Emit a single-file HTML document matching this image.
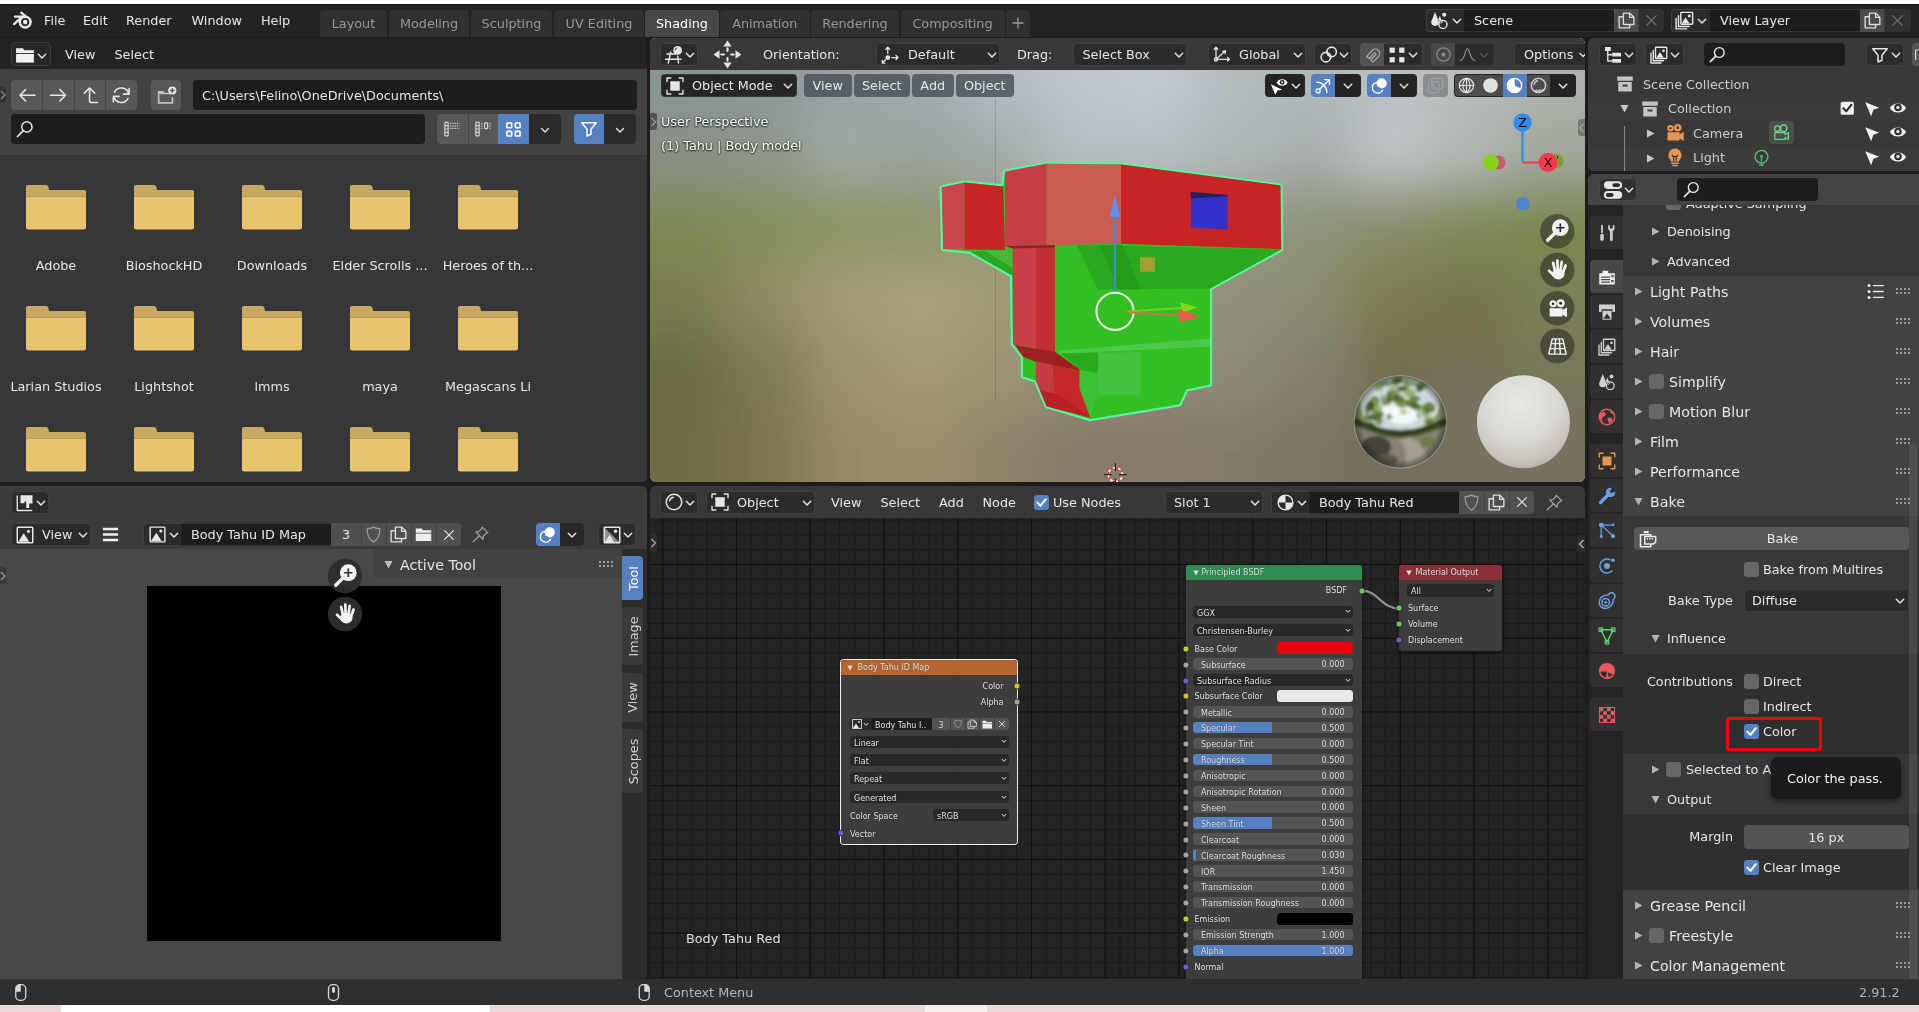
<!DOCTYPE html>
<html><head><meta charset="utf-8"><title>Blender</title>
<style>
html,body{margin:0;padding:0;background:#1d1d1d;}
body{width:1919px;height:1012px;overflow:hidden;}
#root{position:relative;width:1919px;height:1012px;overflow:hidden;background:#1d1d1d;font-family:"DejaVu Sans","Liberation Sans",sans-serif;font-size:13px;color:#e6e6e6;}
#root div,#root svg{position:absolute;box-sizing:border-box;}
#layer{left:0;top:0;width:1919px;height:1012px;will-change:transform;}
#root svg{overflow:visible;}
.t{white-space:nowrap;font-size:12.8px;color:#e6e6e6;}
.tp{white-space:nowrap;font-size:14.2px;color:#e6e6e6;}
.tn{margin-top:1px;white-space:nowrap;font-size:8px;color:#e6e6e6;text-shadow:0 0 1px rgba(0,0,0,.6);}
.ts{white-space:nowrap;font-size:12.8px;color:#fff;text-shadow:0 1px 2px rgba(0,0,0,.9),0 0 2px rgba(0,0,0,.7);}
.clip{overflow:hidden;}

</style></head>
<body>
<div id="root"><div id="layer">
<!-- s_top.py -->
<div style="left:0px;top:0px;width:1919px;height:4px;background:#fff;"></div>
<div style="left:0px;top:4px;width:1919px;height:33px;background:#232323;border-top:1px solid #0e0e0e;"></div>
<svg style="left:10px;top:8px;" width="26" height="24" viewBox="0 0 26 24"><g fill="none" stroke="#ebebeb" stroke-linecap="round"><path d="M4.0 16.1 L11.4 9.6 M4.9 8.7 H12.4 M11.2 4.7 L15.6 8.2" stroke-width="2.3"/><circle cx="15.2" cy="14.1" r="5.35" stroke-width="2.5"/></g><circle cx="15.2" cy="14.1" r="2.3" fill="#ebebeb"/></svg>
<div class="t" style="left:44px;top:8.5px;line-height:24px;">File</div>
<div class="t" style="left:83px;top:8.5px;line-height:24px;">Edit</div>
<div class="t" style="left:126px;top:8.5px;line-height:24px;">Render</div>
<div class="t" style="left:191.5px;top:8.5px;line-height:24px;">Window</div>
<div class="t" style="left:261px;top:8.5px;line-height:24px;">Help</div>
<div style="left:320px;top:10px;width:67px;height:27px;background:#303030;border-radius:4px 4px 0 0;"></div>
<div class="t" style="left:320px;top:10.5px;width:67px;text-align:center;line-height:26px;color:#989898;">Layout</div>
<div style="left:389px;top:10px;width:80px;height:27px;background:#303030;border-radius:4px 4px 0 0;"></div>
<div class="t" style="left:389px;top:10.5px;width:80px;text-align:center;line-height:26px;color:#989898;">Modeling</div>
<div style="left:471px;top:10px;width:81px;height:27px;background:#303030;border-radius:4px 4px 0 0;"></div>
<div class="t" style="left:471px;top:10.5px;width:81px;text-align:center;line-height:26px;color:#989898;">Sculpting</div>
<div style="left:554px;top:10px;width:90px;height:27px;background:#303030;border-radius:4px 4px 0 0;"></div>
<div class="t" style="left:554px;top:10.5px;width:90px;text-align:center;line-height:26px;color:#989898;">UV Editing</div>
<div style="left:645px;top:10px;width:74px;height:27px;background:#484848;border-radius:4px 4px 0 0;"></div>
<div class="t" style="left:645px;top:10.5px;width:74px;text-align:center;line-height:26px;color:#ffffff;">Shading</div>
<div style="left:720px;top:10px;width:89.5px;height:27px;background:#303030;border-radius:4px 4px 0 0;"></div>
<div class="t" style="left:720px;top:10.5px;width:89.5px;text-align:center;line-height:26px;color:#989898;">Animation</div>
<div style="left:811px;top:10px;width:88px;height:27px;background:#303030;border-radius:4px 4px 0 0;"></div>
<div class="t" style="left:811px;top:10.5px;width:88px;text-align:center;line-height:26px;color:#989898;">Rendering</div>
<div style="left:900.5px;top:10px;width:104.0px;height:27px;background:#303030;border-radius:4px 4px 0 0;"></div>
<div class="t" style="left:900.5px;top:10.5px;width:104.0px;text-align:center;line-height:26px;color:#989898;">Compositing</div>
<div style="left:1006px;top:10px;width:23.5px;height:27px;background:#303030;border-radius:4px 4px 0 0;"></div>
<svg style="left:1011.5px;top:17px;" width="12" height="12" viewBox="0 0 12 12"><path d="M6 0.5 V11.5 M0.5 6 H11.5" stroke="#9a9a9a" stroke-width="1.3" fill="none"/></svg>
<div style="left:1426px;top:9px;width:38px;height:23px;background:#2b2b2b;border:1px solid #404040;border-right:none;border-radius:4px 0 0 4px;"></div>
<svg style="left:1429.00px;top:10.00px;" width="21" height="21" viewBox="0 0 16 16"><path d="M4.6 1.6 L7.4 8.6 A2.9 2.9 0 1 1 1.8 8.6Z" fill="#e6e6e6" /><path d="M8.2 4.4 L9.8 8 H6.9Z" fill="#e6e6e6" /><circle cx="11.6" cy="3.6" r="1.6" fill="#e6e6e6"/><circle cx="10.6" cy="11" r="3.1" fill="none" stroke="#e6e6e6" stroke-width="1.1"/><path d="M9 10 A1.8 1.8 0 0 1 10.4 9" fill="none" stroke="#e6e6e6" stroke-width="0.8" stroke-linecap="round" stroke-linejoin="round" /></svg>
<svg style="left:1448.50px;top:13.00px;" width="16" height="16" viewBox="0 0 16 16"><path d="M4.3 6.2 L8 9.9 L11.7 6.2" fill="none" stroke="#e6e6e6" stroke-width="1.45" stroke-linecap="round" stroke-linejoin="round" /></svg>
<div style="left:1464px;top:9px;width:150px;height:23px;background:#1d1d1d;border:1px solid #343434;border-left:none;border-right:none;"></div>
<div class="t" style="left:1474px;top:9px;line-height:23px;">Scene</div>
<div style="left:1614px;top:9px;width:25px;height:23px;background:#4b4b4b;border-right:1px solid #3a3a3a;"></div>
<svg style="left:1617.00px;top:11.00px;" width="19" height="19" viewBox="0 0 16 16"><path d="M5.4 4.6 V1.8 H10.8 L14.2 5.2 V11.4 H5.4 V4.6 M10.6 1.8 V5.4 H14.2 M5.2 4.8 H1.8 V14.2 H10.6 V11.6" fill="none" stroke="#dcdcdc" stroke-width="1.15" stroke-linecap="round" stroke-linejoin="round" /></svg>
<div style="left:1639px;top:9px;width:25px;height:23px;background:#303030;border-radius:0 4px 4px 0;"></div>
<svg style="left:1643.00px;top:12.00px;" width="17" height="17" viewBox="0 0 16 16"><path d="M3.6 3.6 L12.4 12.4 M12.4 3.6 L3.6 12.4" fill="none" stroke="#6a6a6a" stroke-width="1.2" stroke-linecap="round" stroke-linejoin="round" /></svg>
<div style="left:1671px;top:9px;width:39px;height:23px;background:#2b2b2b;border:1px solid #404040;border-right:none;border-radius:4px 0 0 4px;"></div>
<svg style="left:1674.00px;top:10.00px;" width="21" height="21" viewBox="0 0 16 16"><rect x="5.2" y="1.8" width="9" height="9" rx="0.5" fill="none" stroke="#e6e6e6" stroke-width="1.1"/><path d="M5.8 10.2 L8.8 5.6 L11.8 10.2Z" fill="#e6e6e6"/><circle cx="11.6" cy="4.6" r="1.1" fill="#e6e6e6"/><path d="M3.4 4.4 V12.6 H11.6 M1.6 6.4 V14.4 H9.6" fill="none" stroke="#e6e6e6" stroke-width="1.1" stroke-linecap="round" stroke-linejoin="round" /></svg>
<svg style="left:1693.50px;top:13.00px;" width="16" height="16" viewBox="0 0 16 16"><path d="M4.3 6.2 L8 9.9 L11.7 6.2" fill="none" stroke="#e6e6e6" stroke-width="1.45" stroke-linecap="round" stroke-linejoin="round" /></svg>
<div style="left:1710px;top:9px;width:150px;height:23px;background:#1d1d1d;border:1px solid #343434;border-left:none;border-right:none;"></div>
<div class="t" style="left:1720px;top:9px;line-height:23px;">View Layer</div>
<div style="left:1860px;top:9px;width:25px;height:23px;background:#4b4b4b;border-right:1px solid #3a3a3a;"></div>
<svg style="left:1863.00px;top:11.00px;" width="19" height="19" viewBox="0 0 16 16"><path d="M5.4 4.6 V1.8 H10.8 L14.2 5.2 V11.4 H5.4 V4.6 M10.6 1.8 V5.4 H14.2 M5.2 4.8 H1.8 V14.2 H10.6 V11.6" fill="none" stroke="#dcdcdc" stroke-width="1.15" stroke-linecap="round" stroke-linejoin="round" /></svg>
<div style="left:1885px;top:9px;width:26px;height:23px;background:#303030;border-radius:0 4px 4px 0;"></div>
<svg style="left:1889.00px;top:12.00px;" width="17" height="17" viewBox="0 0 16 16"><path d="M3.6 3.6 L12.4 12.4 M12.4 3.6 L3.6 12.4" fill="none" stroke="#6a6a6a" stroke-width="1.2" stroke-linecap="round" stroke-linejoin="round" /></svg>
<!-- s_file.py -->
<div style="left:0px;top:38px;width:647px;height:444px;background:#373737;border-radius:0 5px 5px 0;overflow:hidden;"><div style="left:0;top:0;width:647px;height:31px;background:#232323;"></div><div style="left:0;top:31px;width:647px;height:86px;background:#424242;"></div></div>
<div style="left:10.5px;top:42px;width:40px;height:24px;background:#282828;border:1px solid #3e3e3e;border-radius:5px;"></div>
<svg style="left:14.00px;top:43.50px;" width="22" height="22" viewBox="0 0 16 16"><path d="M1.5 3 h5 l1 1.5 h7 v2 h-13z" fill="#f0f0f0" /><path d="M1.5 7.2 h13 v6.3 h-13z" fill="#f0f0f0" /></svg>
<svg style="left:33.70px;top:47.50px;" width="16" height="16" viewBox="0 0 16 16"><path d="M4.3 6.2 L8 9.9 L11.7 6.2" fill="none" stroke="#e6e6e6" stroke-width="1.45" stroke-linecap="round" stroke-linejoin="round" /></svg>
<div class="t" style="left:65px;top:42.5px;line-height:24px;">View</div>
<div class="t" style="left:114.5px;top:42.5px;line-height:24px;">Select</div>
<div style="left:11px;top:80px;width:126px;height:30px;background:#585858;border-radius:4px;"></div>
<svg style="left:15.50px;top:84.05px;" width="22.5" height="22.5" viewBox="0 0 16 16"><path d="M13.5 8 H2.8 M6.8 4 L2.8 8 L6.8 12" fill="none" stroke="#e6e6e6" stroke-width="1.1" stroke-linecap="round" stroke-linejoin="round" /></svg>
<svg style="left:47.00px;top:84.05px;" width="22.5" height="22.5" viewBox="0 0 16 16"><path d="M2.5 8 H13.2 M9.2 4 L13.2 8 L9.2 12" fill="none" stroke="#e6e6e6" stroke-width="1.1" stroke-linecap="round" stroke-linejoin="round" /></svg>
<div style="left:42.0px;top:80px;width:1px;height:30px;background:#454545;"></div>
<svg style="left:78.50px;top:84.05px;" width="22.5" height="22.5" viewBox="0 0 16 16"><path d="M13 13.2 H9 Q7.5 13.2 7.5 11.7 V3 M3.8 6.5 L7.5 2.8 L11.2 6.5" fill="none" stroke="#e6e6e6" stroke-width="1.1" stroke-linecap="round" stroke-linejoin="round" /></svg>
<div style="left:73.5px;top:80px;width:1px;height:30px;background:#454545;"></div>
<svg style="left:110.00px;top:84.05px;" width="22.5" height="22.5" viewBox="0 0 16 16"><path d="M13.3 7.2 A5.4 5.4 0 0 0 3.2 5.8 M2.7 8.8 A5.4 5.4 0 0 0 12.8 10.2 M13.6 3.2 V7.2 H9.6 M2.4 12.8 V8.8 H6.4" fill="none" stroke="#e6e6e6" stroke-width="1.1" stroke-linecap="round" stroke-linejoin="round" /></svg>
<div style="left:105.0px;top:80px;width:1px;height:30px;background:#454545;"></div>
<div style="left:151px;top:80px;width:30px;height:30px;background:#585858;border-radius:4px;"></div>
<svg style="left:155.25px;top:83.75px;" width="22.5" height="22.5" viewBox="0 0 16 16"><path d="M2 5 h4 l1 1.3 h4.2 v1 h-9.2z" fill="#e6e6e6" opacity=".75"/><path d="M2.6 7.5 V13.4 H12.4 V9.5" fill="none" stroke="#e6e6e6" stroke-width="1.2" opacity=".75"/><circle cx="12.3" cy="4.6" r="2.9" fill="#e6e6e6"/><path d="M12.3 3 v3.2 M10.7 4.6 h3.2" stroke="#545454" stroke-width="1"/></svg>
<div style="left:193px;top:80px;width:444px;height:30px;background:#1d1d1d;border-radius:4px;"></div>
<div class="t" style="left:202px;top:80.5px;line-height:30px;">C:\Users\Felino\OneDrive\Documents\</div>
<div style="left:11px;top:114px;width:414px;height:30px;background:#1d1d1d;border-radius:4px;"></div>
<svg style="left:15.00px;top:118.50px;" width="20" height="20" viewBox="0 0 16 16"><circle cx="9.5" cy="6.3" r="4.1" fill="none" stroke="#e6e6e6" stroke-width="1.2"/><path d="M6.6 9.3 L2 14" fill="none" stroke="#e6e6e6" stroke-width="1.4" stroke-linecap="round" stroke-linejoin="round" /></svg>
<div style="left:437px;top:114px;width:92px;height:30px;background:#585858;border-radius:4px 0 0 4px;"></div>
<div style="left:467.5px;top:114px;width:1px;height:30px;background:#454545;"></div>
<svg style="left:442.00px;top:119.00px;" width="20" height="20" viewBox="0 0 16 16"><rect x="2.3" y="2.5" width="2.6" height="11" rx="0.6" fill="none" stroke="#d0d0d0" stroke-width="1"/><path d="M2.5 5.3 h2.4 M2.5 8 h2.4 M2.5 10.7 h2.4" fill="none" stroke="#d0d0d0" stroke-width="0.9" stroke-linecap="round" stroke-linejoin="round" /><path d="M6.5 3.5 h7.5" stroke="#d0d0d0" stroke-width="1" stroke-dasharray="1 0.8" fill="none"/><path d="M6.5 5.5 h7.5" stroke="#d0d0d0" stroke-width="1" stroke-dasharray="1 0.8" fill="none"/><path d="M6.5 7.5 h7.5" stroke="#d0d0d0" stroke-width="1" stroke-dasharray="1 0.8" fill="none"/></svg>
<svg style="left:472.50px;top:119.00px;" width="20" height="20" viewBox="0 0 16 16"><rect x="2.3" y="2.5" width="2.6" height="11" rx="0.6" fill="none" stroke="#d0d0d0" stroke-width="1"/><path d="M2.5 5.3 h2.4 M2.5 8 h2.4 M2.5 10.7 h2.4" fill="none" stroke="#d0d0d0" stroke-width="0.9" stroke-linecap="round" stroke-linejoin="round" /><rect x="9.3" y="3" width="2.4" height="4.6" rx="0.5" fill="none" stroke="#d0d0d0" stroke-width="1"/><path d="M7 3.2 v4.6" stroke="#d0d0d0" stroke-width="1" stroke-dasharray="1 0.9" fill="none"/><path d="M13.6 3.2 v4.6" stroke="#d0d0d0" stroke-width="1" stroke-dasharray="1 0.9" fill="none"/></svg>
<div style="left:498px;top:114px;width:31px;height:30px;background:#5680c2;"></div>
<svg style="left:503.00px;top:118.50px;" width="21" height="21" viewBox="0 0 16 16"><rect x="3" y="3" width="3.6" height="3.6" rx="0.4" fill="none" stroke="#ffffff" stroke-width="1.2"/><rect x="3" y="9.4" width="3.6" height="3.6" rx="0.4" fill="none" stroke="#ffffff" stroke-width="1.2"/><rect x="9.4" y="3" width="3.6" height="3.6" rx="0.4" fill="none" stroke="#ffffff" stroke-width="1.2"/><rect x="9.4" y="9.4" width="3.6" height="3.6" rx="0.4" fill="none" stroke="#ffffff" stroke-width="1.2"/></svg>
<div style="left:529px;top:114px;width:32px;height:30px;background:#2a2a2a;border-radius:0 4px 4px 0;"></div>
<svg style="left:537.00px;top:121.50px;" width="16" height="16" viewBox="0 0 16 16"><path d="M4.5 6.5 L8 10 L11.5 6.5" fill="none" stroke="#e6e6e6" stroke-width="1.4" stroke-linecap="round" stroke-linejoin="round" /></svg>
<div style="left:574px;top:114px;width:30px;height:30px;background:#5680c2;border-radius:4px 0 0 4px;"></div>
<svg style="left:579.00px;top:119.00px;" width="20" height="20" viewBox="0 0 16 16"><path d="M2.2 3 H13.8 L9.6 8.2 V12.2 L6.4 13.6 V8.2 Z" fill="none" stroke="#ffffff" stroke-width="1.2" stroke-linecap="round" stroke-linejoin="round" /></svg>
<div style="left:604px;top:114px;width:32px;height:30px;background:#2a2a2a;border-radius:0 4px 4px 0;"></div>
<svg style="left:612.00px;top:121.50px;" width="16" height="16" viewBox="0 0 16 16"><path d="M4.5 6.5 L8 10 L11.5 6.5" fill="none" stroke="#e6e6e6" stroke-width="1.4" stroke-linecap="round" stroke-linejoin="round" /></svg>
<div style="left:0px;top:87px;width:6px;height:16px;background:#333;border-radius:0 3px 3px 0;"></div>
<svg style="left:0px;top:90px;" width="6" height="10" viewBox="0 0 6 10"><path d="M1 1 L5 5 L1 9" stroke="#8a8a8a" stroke-width="1.2" fill="none"/></svg>
<svg style="left:26px;top:185px;overflow:hidden" width="60" height="44.5" viewBox="0 0 60 44.5"><path d="M0 2 Q0 0 2 0 H20 Q22 0 22.4 2 L23 5 H58 Q60 5 60 7 V12 H0Z" fill="#c7a962"/><path d="M0 11.3 H60 V11.8 H0Z" fill="#a88f52"/><path d="M0 12 H60 V42.5 Q60 44.5 58 44.5 H2 Q0 44.5 0 42.5Z" fill="#e8c46f"/></svg>
<div class="t" style="left:-4px;top:253.5px;width:120px;text-align:center;line-height:24px;">Adobe</div>
<svg style="left:134px;top:185px;overflow:hidden" width="60" height="44.5" viewBox="0 0 60 44.5"><path d="M0 2 Q0 0 2 0 H20 Q22 0 22.4 2 L23 5 H58 Q60 5 60 7 V12 H0Z" fill="#c7a962"/><path d="M0 11.3 H60 V11.8 H0Z" fill="#a88f52"/><path d="M0 12 H60 V42.5 Q60 44.5 58 44.5 H2 Q0 44.5 0 42.5Z" fill="#e8c46f"/></svg>
<div class="t" style="left:104px;top:253.5px;width:120px;text-align:center;line-height:24px;">BioshockHD</div>
<svg style="left:242px;top:185px;overflow:hidden" width="60" height="44.5" viewBox="0 0 60 44.5"><path d="M0 2 Q0 0 2 0 H20 Q22 0 22.4 2 L23 5 H58 Q60 5 60 7 V12 H0Z" fill="#c7a962"/><path d="M0 11.3 H60 V11.8 H0Z" fill="#a88f52"/><path d="M0 12 H60 V42.5 Q60 44.5 58 44.5 H2 Q0 44.5 0 42.5Z" fill="#e8c46f"/></svg>
<div class="t" style="left:212px;top:253.5px;width:120px;text-align:center;line-height:24px;">Downloads</div>
<svg style="left:350px;top:185px;overflow:hidden" width="60" height="44.5" viewBox="0 0 60 44.5"><path d="M0 2 Q0 0 2 0 H20 Q22 0 22.4 2 L23 5 H58 Q60 5 60 7 V12 H0Z" fill="#c7a962"/><path d="M0 11.3 H60 V11.8 H0Z" fill="#a88f52"/><path d="M0 12 H60 V42.5 Q60 44.5 58 44.5 H2 Q0 44.5 0 42.5Z" fill="#e8c46f"/></svg>
<div class="t" style="left:320px;top:253.5px;width:120px;text-align:center;line-height:24px;">Elder Scrolls ...</div>
<svg style="left:458px;top:185px;overflow:hidden" width="60" height="44.5" viewBox="0 0 60 44.5"><path d="M0 2 Q0 0 2 0 H20 Q22 0 22.4 2 L23 5 H58 Q60 5 60 7 V12 H0Z" fill="#c7a962"/><path d="M0 11.3 H60 V11.8 H0Z" fill="#a88f52"/><path d="M0 12 H60 V42.5 Q60 44.5 58 44.5 H2 Q0 44.5 0 42.5Z" fill="#e8c46f"/></svg>
<div class="t" style="left:428px;top:253.5px;width:120px;text-align:center;line-height:24px;">Heroes of th...</div>
<svg style="left:26px;top:306px;overflow:hidden" width="60" height="44.5" viewBox="0 0 60 44.5"><path d="M0 2 Q0 0 2 0 H20 Q22 0 22.4 2 L23 5 H58 Q60 5 60 7 V12 H0Z" fill="#c7a962"/><path d="M0 11.3 H60 V11.8 H0Z" fill="#a88f52"/><path d="M0 12 H60 V42.5 Q60 44.5 58 44.5 H2 Q0 44.5 0 42.5Z" fill="#e8c46f"/></svg>
<div class="t" style="left:-4px;top:374.5px;width:120px;text-align:center;line-height:24px;">Larian Studios</div>
<svg style="left:134px;top:306px;overflow:hidden" width="60" height="44.5" viewBox="0 0 60 44.5"><path d="M0 2 Q0 0 2 0 H20 Q22 0 22.4 2 L23 5 H58 Q60 5 60 7 V12 H0Z" fill="#c7a962"/><path d="M0 11.3 H60 V11.8 H0Z" fill="#a88f52"/><path d="M0 12 H60 V42.5 Q60 44.5 58 44.5 H2 Q0 44.5 0 42.5Z" fill="#e8c46f"/></svg>
<div class="t" style="left:104px;top:374.5px;width:120px;text-align:center;line-height:24px;">Lightshot</div>
<svg style="left:242px;top:306px;overflow:hidden" width="60" height="44.5" viewBox="0 0 60 44.5"><path d="M0 2 Q0 0 2 0 H20 Q22 0 22.4 2 L23 5 H58 Q60 5 60 7 V12 H0Z" fill="#c7a962"/><path d="M0 11.3 H60 V11.8 H0Z" fill="#a88f52"/><path d="M0 12 H60 V42.5 Q60 44.5 58 44.5 H2 Q0 44.5 0 42.5Z" fill="#e8c46f"/></svg>
<div class="t" style="left:212px;top:374.5px;width:120px;text-align:center;line-height:24px;">lmms</div>
<svg style="left:350px;top:306px;overflow:hidden" width="60" height="44.5" viewBox="0 0 60 44.5"><path d="M0 2 Q0 0 2 0 H20 Q22 0 22.4 2 L23 5 H58 Q60 5 60 7 V12 H0Z" fill="#c7a962"/><path d="M0 11.3 H60 V11.8 H0Z" fill="#a88f52"/><path d="M0 12 H60 V42.5 Q60 44.5 58 44.5 H2 Q0 44.5 0 42.5Z" fill="#e8c46f"/></svg>
<div class="t" style="left:320px;top:374.5px;width:120px;text-align:center;line-height:24px;">maya</div>
<svg style="left:458px;top:306px;overflow:hidden" width="60" height="44.5" viewBox="0 0 60 44.5"><path d="M0 2 Q0 0 2 0 H20 Q22 0 22.4 2 L23 5 H58 Q60 5 60 7 V12 H0Z" fill="#c7a962"/><path d="M0 11.3 H60 V11.8 H0Z" fill="#a88f52"/><path d="M0 12 H60 V42.5 Q60 44.5 58 44.5 H2 Q0 44.5 0 42.5Z" fill="#e8c46f"/></svg>
<div class="t" style="left:428px;top:374.5px;width:120px;text-align:center;line-height:24px;">Megascans Li</div>
<svg style="left:26px;top:427px;overflow:hidden" width="60" height="44.5" viewBox="0 0 60 44.5"><path d="M0 2 Q0 0 2 0 H20 Q22 0 22.4 2 L23 5 H58 Q60 5 60 7 V12 H0Z" fill="#c7a962"/><path d="M0 11.3 H60 V11.8 H0Z" fill="#a88f52"/><path d="M0 12 H60 V42.5 Q60 44.5 58 44.5 H2 Q0 44.5 0 42.5Z" fill="#e8c46f"/></svg>
<svg style="left:134px;top:427px;overflow:hidden" width="60" height="44.5" viewBox="0 0 60 44.5"><path d="M0 2 Q0 0 2 0 H20 Q22 0 22.4 2 L23 5 H58 Q60 5 60 7 V12 H0Z" fill="#c7a962"/><path d="M0 11.3 H60 V11.8 H0Z" fill="#a88f52"/><path d="M0 12 H60 V42.5 Q60 44.5 58 44.5 H2 Q0 44.5 0 42.5Z" fill="#e8c46f"/></svg>
<svg style="left:242px;top:427px;overflow:hidden" width="60" height="44.5" viewBox="0 0 60 44.5"><path d="M0 2 Q0 0 2 0 H20 Q22 0 22.4 2 L23 5 H58 Q60 5 60 7 V12 H0Z" fill="#c7a962"/><path d="M0 11.3 H60 V11.8 H0Z" fill="#a88f52"/><path d="M0 12 H60 V42.5 Q60 44.5 58 44.5 H2 Q0 44.5 0 42.5Z" fill="#e8c46f"/></svg>
<svg style="left:350px;top:427px;overflow:hidden" width="60" height="44.5" viewBox="0 0 60 44.5"><path d="M0 2 Q0 0 2 0 H20 Q22 0 22.4 2 L23 5 H58 Q60 5 60 7 V12 H0Z" fill="#c7a962"/><path d="M0 11.3 H60 V11.8 H0Z" fill="#a88f52"/><path d="M0 12 H60 V42.5 Q60 44.5 58 44.5 H2 Q0 44.5 0 42.5Z" fill="#e8c46f"/></svg>
<svg style="left:458px;top:427px;overflow:hidden" width="60" height="44.5" viewBox="0 0 60 44.5"><path d="M0 2 Q0 0 2 0 H20 Q22 0 22.4 2 L23 5 H58 Q60 5 60 7 V12 H0Z" fill="#c7a962"/><path d="M0 11.3 H60 V11.8 H0Z" fill="#a88f52"/><path d="M0 12 H60 V42.5 Q60 44.5 58 44.5 H2 Q0 44.5 0 42.5Z" fill="#e8c46f"/></svg>
<!-- s_view3d.py -->
<div style="left:650px;top:38px;width:935px;height:444px;background:#8c8a70;border-radius:6px;overflow:hidden;"><svg width="935" height="444" viewBox="0 0 935 444" style="left:0;top:0"><defs><filter id="vbl" x="-20%" y="-20%" width="140%" height="140%"><feGaussianBlur stdDeviation="26"/></filter></defs><rect x="-80" y="-80" width="1100" height="610" fill="#8c8a70"/><g filter="url(#vbl)"><rect x="-77.9" y="-74.0" width="78.9" height="75.0" fill="#8a9496"/><rect x="0.0" y="-74.0" width="78.9" height="75.0" fill="#8a9496"/><rect x="77.9" y="-74.0" width="78.9" height="75.0" fill="#8f999b"/><rect x="155.8" y="-74.0" width="78.9" height="75.0" fill="#98a2a6"/><rect x="233.8" y="-74.0" width="78.9" height="75.0" fill="#a2acb0"/><rect x="311.7" y="-74.0" width="78.9" height="75.0" fill="#b4bec4"/><rect x="389.6" y="-74.0" width="78.9" height="75.0" fill="#bcc6cc"/><rect x="467.5" y="-74.0" width="78.9" height="75.0" fill="#c0cad0"/><rect x="545.4" y="-74.0" width="78.9" height="75.0" fill="#b4bcc0"/><rect x="623.3" y="-74.0" width="78.9" height="75.0" fill="#b0b8ba"/><rect x="701.2" y="-74.0" width="78.9" height="75.0" fill="#bac0c2"/><rect x="779.2" y="-74.0" width="78.9" height="75.0" fill="#b8bcbc"/><rect x="857.1" y="-74.0" width="78.9" height="75.0" fill="#aeb2ae"/><rect x="935.0" y="-74.0" width="78.9" height="75.0" fill="#aeb2ae"/><rect x="-77.9" y="0.0" width="78.9" height="75.0" fill="#8a9496"/><rect x="0.0" y="0.0" width="78.9" height="75.0" fill="#8a9496"/><rect x="77.9" y="0.0" width="78.9" height="75.0" fill="#8f999b"/><rect x="155.8" y="0.0" width="78.9" height="75.0" fill="#98a2a6"/><rect x="233.8" y="0.0" width="78.9" height="75.0" fill="#a2acb0"/><rect x="311.7" y="0.0" width="78.9" height="75.0" fill="#b4bec4"/><rect x="389.6" y="0.0" width="78.9" height="75.0" fill="#bcc6cc"/><rect x="467.5" y="0.0" width="78.9" height="75.0" fill="#c0cad0"/><rect x="545.4" y="0.0" width="78.9" height="75.0" fill="#b4bcc0"/><rect x="623.3" y="0.0" width="78.9" height="75.0" fill="#b0b8ba"/><rect x="701.2" y="0.0" width="78.9" height="75.0" fill="#bac0c2"/><rect x="779.2" y="0.0" width="78.9" height="75.0" fill="#b8bcbc"/><rect x="857.1" y="0.0" width="78.9" height="75.0" fill="#aeb2ae"/><rect x="935.0" y="0.0" width="78.9" height="75.0" fill="#aeb2ae"/><rect x="-77.9" y="74.0" width="78.9" height="75.0" fill="#8a9088"/><rect x="0.0" y="74.0" width="78.9" height="75.0" fill="#8a9088"/><rect x="77.9" y="74.0" width="78.9" height="75.0" fill="#8e958c"/><rect x="155.8" y="74.0" width="78.9" height="75.0" fill="#a0a8a4"/><rect x="233.8" y="74.0" width="78.9" height="75.0" fill="#9aa29e"/><rect x="311.7" y="74.0" width="78.9" height="75.0" fill="#a4acac"/><rect x="389.6" y="74.0" width="78.9" height="75.0" fill="#b8c0c4"/><rect x="467.5" y="74.0" width="78.9" height="75.0" fill="#b8c0c4"/><rect x="545.4" y="74.0" width="78.9" height="75.0" fill="#b0b8ba"/><rect x="623.3" y="74.0" width="78.9" height="75.0" fill="#a8aeae"/><rect x="701.2" y="74.0" width="78.9" height="75.0" fill="#c0c6c8"/><rect x="779.2" y="74.0" width="78.9" height="75.0" fill="#b4b8b6"/><rect x="857.1" y="74.0" width="78.9" height="75.0" fill="#a2a89c"/><rect x="935.0" y="74.0" width="78.9" height="75.0" fill="#a2a89c"/><rect x="-77.9" y="148.0" width="78.9" height="75.0" fill="#7e8a54"/><rect x="0.0" y="148.0" width="78.9" height="75.0" fill="#7e8a54"/><rect x="77.9" y="148.0" width="78.9" height="75.0" fill="#84905a"/><rect x="155.8" y="148.0" width="78.9" height="75.0" fill="#8a9462"/><rect x="233.8" y="148.0" width="78.9" height="75.0" fill="#8c9468"/><rect x="311.7" y="148.0" width="78.9" height="75.0" fill="#949a78"/><rect x="389.6" y="148.0" width="78.9" height="75.0" fill="#9a9e88"/><rect x="467.5" y="148.0" width="78.9" height="75.0" fill="#9a9e88"/><rect x="545.4" y="148.0" width="78.9" height="75.0" fill="#949a80"/><rect x="623.3" y="148.0" width="78.9" height="75.0" fill="#8c9478"/><rect x="701.2" y="148.0" width="78.9" height="75.0" fill="#8a8e6c"/><rect x="779.2" y="148.0" width="78.9" height="75.0" fill="#808a58"/><rect x="857.1" y="148.0" width="78.9" height="75.0" fill="#7a8850"/><rect x="935.0" y="148.0" width="78.9" height="75.0" fill="#7a8850"/><rect x="-77.9" y="222.0" width="78.9" height="75.0" fill="#7a7c50"/><rect x="0.0" y="222.0" width="78.9" height="75.0" fill="#7a7c50"/><rect x="77.9" y="222.0" width="78.9" height="75.0" fill="#908c64"/><rect x="155.8" y="222.0" width="78.9" height="75.0" fill="#a49c78"/><rect x="233.8" y="222.0" width="78.9" height="75.0" fill="#a8a07c"/><rect x="311.7" y="222.0" width="78.9" height="75.0" fill="#a09a78"/><rect x="389.6" y="222.0" width="78.9" height="75.0" fill="#98947a"/><rect x="467.5" y="222.0" width="78.9" height="75.0" fill="#94907a"/><rect x="545.4" y="222.0" width="78.9" height="75.0" fill="#90907c"/><rect x="623.3" y="222.0" width="78.9" height="75.0" fill="#8c8c70"/><rect x="701.2" y="222.0" width="78.9" height="75.0" fill="#7c7a52"/><rect x="779.2" y="222.0" width="78.9" height="75.0" fill="#74744c"/><rect x="857.1" y="222.0" width="78.9" height="75.0" fill="#7c8054"/><rect x="935.0" y="222.0" width="78.9" height="75.0" fill="#7c8054"/><rect x="-77.9" y="296.0" width="78.9" height="75.0" fill="#6c6c44"/><rect x="0.0" y="296.0" width="78.9" height="75.0" fill="#6c6c44"/><rect x="77.9" y="296.0" width="78.9" height="75.0" fill="#7e7a54"/><rect x="155.8" y="296.0" width="78.9" height="75.0" fill="#9c9270"/><rect x="233.8" y="296.0" width="78.9" height="75.0" fill="#a49a78"/><rect x="311.7" y="296.0" width="78.9" height="75.0" fill="#9c9474"/><rect x="389.6" y="296.0" width="78.9" height="75.0" fill="#948c74"/><rect x="467.5" y="296.0" width="78.9" height="75.0" fill="#908876"/><rect x="545.4" y="296.0" width="78.9" height="75.0" fill="#8e8a7c"/><rect x="623.3" y="296.0" width="78.9" height="75.0" fill="#84806c"/><rect x="701.2" y="296.0" width="78.9" height="75.0" fill="#726e50"/><rect x="779.2" y="296.0" width="78.9" height="75.0" fill="#747056"/><rect x="857.1" y="296.0" width="78.9" height="75.0" fill="#78785a"/><rect x="935.0" y="296.0" width="78.9" height="75.0" fill="#78785a"/><rect x="-77.9" y="370.0" width="78.9" height="75.0" fill="#706c44"/><rect x="0.0" y="370.0" width="78.9" height="75.0" fill="#706c44"/><rect x="77.9" y="370.0" width="78.9" height="75.0" fill="#7c7650"/><rect x="155.8" y="370.0" width="78.9" height="75.0" fill="#968a66"/><rect x="233.8" y="370.0" width="78.9" height="75.0" fill="#9a8e6c"/><rect x="311.7" y="370.0" width="78.9" height="75.0" fill="#8e846a"/><rect x="389.6" y="370.0" width="78.9" height="75.0" fill="#867c68"/><rect x="467.5" y="370.0" width="78.9" height="75.0" fill="#867c6a"/><rect x="545.4" y="370.0" width="78.9" height="75.0" fill="#827a68"/><rect x="623.3" y="370.0" width="78.9" height="75.0" fill="#7c7462"/><rect x="701.2" y="370.0" width="78.9" height="75.0" fill="#766e5c"/><rect x="779.2" y="370.0" width="78.9" height="75.0" fill="#787060"/><rect x="857.1" y="370.0" width="78.9" height="75.0" fill="#787060"/><rect x="935.0" y="370.0" width="78.9" height="75.0" fill="#787060"/><rect x="-77.9" y="444.0" width="78.9" height="75.0" fill="#706c44"/><rect x="0.0" y="444.0" width="78.9" height="75.0" fill="#706c44"/><rect x="77.9" y="444.0" width="78.9" height="75.0" fill="#7c7650"/><rect x="155.8" y="444.0" width="78.9" height="75.0" fill="#968a66"/><rect x="233.8" y="444.0" width="78.9" height="75.0" fill="#9a8e6c"/><rect x="311.7" y="444.0" width="78.9" height="75.0" fill="#8e846a"/><rect x="389.6" y="444.0" width="78.9" height="75.0" fill="#867c68"/><rect x="467.5" y="444.0" width="78.9" height="75.0" fill="#867c6a"/><rect x="545.4" y="444.0" width="78.9" height="75.0" fill="#827a68"/><rect x="623.3" y="444.0" width="78.9" height="75.0" fill="#7c7462"/><rect x="701.2" y="444.0" width="78.9" height="75.0" fill="#766e5c"/><rect x="779.2" y="444.0" width="78.9" height="75.0" fill="#787060"/><rect x="857.1" y="444.0" width="78.9" height="75.0" fill="#787060"/><rect x="935.0" y="444.0" width="78.9" height="75.0" fill="#787060"/></g></svg></div>
<div style="left:995px;top:98px;width:1px;height:302px;background:rgba(40,40,30,.16);"></div>
<svg style="left:650px;top:38px;overflow:hidden;border-radius:6px;" width="935" height="444" viewBox="650 38 935 444"><polygon points="941.8,187.5 964.5,182.6 1003.2,186.5 1005,171.7 1046.7,163.8 1121,164.4 1280.4,185.5 1281.2,249.4 1210,288.4 1210,384.5 1186.3,389.4 1179.4,404.3 1090.3,419.1 1046.7,406.2 1035.8,380.5 1023,376.5 1023,356.7 1013,343.9 1012,275.5 970.5,251.8 943.2,249" fill="#31bf21" stroke="#5cf0a2" stroke-width="4.4" stroke-linejoin="round"/><polygon points="941.8,187.5 964.5,182.6 1003.2,186.5 1005,171.7 1046.7,163.8 1121,164.4 1280.4,185.5 1281.2,249.4 1210,288.4 1210,384.5 1186.3,389.4 1179.4,404.3 1090.3,419.1 1046.7,406.2 1035.8,380.5 1023,376.5 1023,356.7 1013,343.9 1012,275.5 970.5,251.8 943.2,249" fill="#31bf21" /><polygon points="970.5,251.8 1012.5,250 1012.5,275.5" fill="#2aa61f" /><polygon points="985,251 1012.5,250 1012.5,268" fill="#46b83c" /><polygon points="1076.4,244.9 1281,249.6 1210,288.4 1098,289.4" fill="#2aa81e" /><polygon points="1100,245 1122,245 1141,289.2 1118,289.3" fill="#259c1b" /><polygon points="1058.6,350.8 1210,338.5 1210,346.8 1058.6,353.8" fill="#4cc84a" /><polygon points="1062,353.6 1098,352.8 1098,372.8 1079.4,369.8" fill="#29aa1d" /><polygon points="1098,352.8 1140.8,352.2 1140.8,395.3 1098,395.3" fill="#46c13d" /><polygon points="1079.4,370 1098,373 1098,395 1090.3,417 1079.4,388.4" fill="#3cc033" /><polygon points="1012.7,246 1036,246 1036,348 1015,344.9 1013,343.9" fill="#c83e49" /><polygon points="1036,246 1055,246 1055,352.8 1036,348.5" fill="#c52e33" /><polygon points="1015,344.9 1054.7,351.8 1079,369 1079.4,370.8 1035.8,361.7 1023,356.7" fill="#9e2020" /><polygon points="1035.8,361.2 1052,365 1056,409 1046.7,406.2 1035.8,380.5" fill="#c83a42" /><polygon points="1052,365 1079.4,370.6 1079.4,388.4 1090.3,417.4 1056,409" fill="#c4282c" /><polygon points="1046.7,406.2 1040,390 1062,396 1090.3,417.4" fill="#b82226" /><polygon points="941.8,187.5 964.5,182.6 964.5,249.5 943.2,249" fill="#c9464f" /><polygon points="964.5,182.6 1003.2,186.5 1005,250 964.5,249.5" fill="#c72526" /><polygon points="1005,171.7 1046.7,163.8 1046.7,245.2 1005,246" fill="#c63c47" /><polygon points="1046.7,163.8 1121,164.4 1121,243.8 1046.7,245.2" fill="#c95b50" /><polygon points="1121,164.4 1280.4,185.5 1281.2,249.2 1121,243.8" fill="#c72425" /><polygon points="1005,246 1055,245 1055,247.5 1012.7,248.5" fill="#8e2226" /><polygon points="1190.9,191.9 1227.5,195 1227.5,229.5 1190.9,227.5" fill="#3231c9" /><polygon points="1190.9,191.9 1227.5,195 1227.5,196.3 1190.9,198.6" fill="#232458" /><rect x="1140" y="257.4" width="15" height="14.3" fill="#d29a38" opacity=".72"/><rect x="1144" y="257.4" width="4" height="14.3" fill="#a0a040" opacity=".5"/><path d="M1115 216 V292.5" stroke="#3d8fd6" stroke-width="2.2" opacity=".95"/><polygon points="1115,194.2 1109.8,217 1120.2,217" fill="#5b8ff0" /><circle cx="1115" cy="311.3" r="18.6" fill="none" stroke="#f0f4ec" stroke-width="2.1" opacity=".95"/><path d="M1127 311.4 L1182 308" stroke="#7ad320" stroke-width="2" opacity=".9"/><polygon points="1197.5,307.4 1180,302.3 1183,312.4" fill="#86d81e" /><path d="M1127 312.2 L1180 315.4" stroke="#e26a48" stroke-width="2" opacity=".9"/><polygon points="1199.5,316.4 1178,309 1180,322.6" fill="#f25a50" /><circle cx="1115.3" cy="474.7" r="7" fill="none" stroke="#fff" stroke-width="1.6"/><circle cx="1115.3" cy="474.7" r="7" fill="none" stroke="#e8202a" stroke-width="1.6" stroke-dasharray="2.75 2.75"/><path d="M1115.3 463 V471 M1115.3 478.4 V484 M1104 474.7 H1111.6 M1119 474.7 H1127" stroke="#111" stroke-width="1"/><circle cx="1498.5" cy="162.5" r="7" fill="#c75a70"/><circle cx="1491" cy="162.5" r="7.8" fill="#84d414"/><circle cx="1522.9" cy="203.8" r="6.8" fill="#4a86cf"/><circle cx="1556.5" cy="161" r="7" fill="#7fa02e"/><path d="M1522.5 130 V162.5" stroke="#2f8df0" stroke-width="2.2"/><path d="M1522.5 162.5 H1540" stroke="#f8364e" stroke-width="2.2"/><circle cx="1522.5" cy="122.5" r="9.2" fill="#2f8df3"/><circle cx="1548" cy="162.5" r="9.4" fill="#f8364f"/><text x="1522.5" y="127.2" font-size="12.5" text-anchor="middle" fill="#000">Z</text><text x="1548" y="167.2" font-size="12.5" text-anchor="middle" fill="#000">X</text><text x="1556.5" y="163" font-size="8" fill="#000">'</text><circle cx="1557.2" cy="231.3" r="17.2" fill="#1a1a1a" opacity=".48"/><circle cx="1557.2" cy="270" r="17.2" fill="#1a1a1a" opacity=".48"/><circle cx="1557.2" cy="308.2" r="17.2" fill="#1a1a1a" opacity=".48"/><circle cx="1557.2" cy="346" r="17.2" fill="#1a1a1a" opacity=".48"/><defs><radialGradient id="ws" cx="46%" cy="30%" r="78%"><stop offset="0" stop-color="#e9e8e6"/><stop offset=".5" stop-color="#dbd9d5"/><stop offset=".8" stop-color="#c6c3bc"/><stop offset="1" stop-color="#aaa69c"/></radialGradient><radialGradient id="hs2" cx="50%" cy="50%" r="50%"><stop offset=".82" stop-color="#000" stop-opacity="0"/><stop offset="1" stop-color="#20261a" stop-opacity=".55"/></radialGradient><clipPath id="hc"><circle cx="1400.4" cy="421.8" r="46.5"/></clipPath><filter id="bl"><feGaussianBlur stdDeviation="1.5"/></filter></defs><circle cx="1523.4" cy="421.8" r="46.5" fill="url(#ws)"/><circle cx="1400.4" cy="421.8" r="46.5" fill="#7f9160"/><g clip-path="url(#hc)"><g filter="url(#bl)"><ellipse cx="1400" cy="404" rx="40" ry="27" fill="#cfd9dc"/><ellipse cx="1402" cy="410" rx="20" ry="14" fill="#f4f7f8"/><ellipse cx="1386.9" cy="403.4" rx="5.6" ry="2.8" fill="#94aa68" opacity="0.59"/><ellipse cx="1412.2" cy="383.7" rx="3.9" ry="2.8" fill="#6a883e" opacity="0.58"/><ellipse cx="1370.6" cy="417.3" rx="6.3" ry="2.9" fill="#4a662a" opacity="0.80"/><ellipse cx="1406.5" cy="402.2" rx="5.3" ry="2.7" fill="#4a662a" opacity="0.57"/><ellipse cx="1425.9" cy="413.5" rx="3.6" ry="2.9" fill="#7c9a4c" opacity="0.77"/><ellipse cx="1413.6" cy="404.5" rx="5.3" ry="3.2" fill="#5c7838" opacity="0.77"/><ellipse cx="1379.0" cy="420.6" rx="3.8" ry="4.9" fill="#6a883e" opacity="0.86"/><ellipse cx="1395.4" cy="382.0" rx="4.4" ry="3.4" fill="#4a662a" opacity="0.83"/><ellipse cx="1374.3" cy="401.5" rx="5.1" ry="5.6" fill="#3e5624" opacity="0.73"/><ellipse cx="1408.4" cy="402.6" rx="5.0" ry="3.1" fill="#7c9a4c" opacity="0.61"/><ellipse cx="1399.6" cy="401.9" rx="5.7" ry="5.2" fill="#94aa68" opacity="0.87"/><ellipse cx="1425.5" cy="409.7" rx="4.4" ry="4.2" fill="#6a883e" opacity="0.58"/><ellipse cx="1374.3" cy="417.6" rx="5.8" ry="2.7" fill="#3e5624" opacity="0.83"/><ellipse cx="1421.7" cy="385.4" rx="6.3" ry="3.5" fill="#6a883e" opacity="0.90"/><ellipse cx="1378.9" cy="386.9" rx="4.4" ry="4.6" fill="#6a883e" opacity="0.57"/><ellipse cx="1418.9" cy="408.6" rx="4.0" ry="3.9" fill="#6a883e" opacity="0.58"/><ellipse cx="1394.6" cy="390.8" rx="6.5" ry="5.4" fill="#94aa68" opacity="0.66"/><ellipse cx="1392.1" cy="395.8" rx="6.5" ry="5.9" fill="#4a662a" opacity="0.58"/><ellipse cx="1367.0" cy="409.6" rx="3.0" ry="5.4" fill="#4a662a" opacity="0.66"/><ellipse cx="1370.7" cy="425.9" rx="4.5" ry="4.5" fill="#4a662a" opacity="0.83"/><ellipse cx="1402.3" cy="388.8" rx="5.7" ry="2.7" fill="#3e5624" opacity="0.87"/><ellipse cx="1389.7" cy="395.6" rx="3.4" ry="4.7" fill="#5c7838" opacity="0.63"/><ellipse cx="1430.8" cy="424.8" rx="3.4" ry="4.6" fill="#5c7838" opacity="0.55"/><ellipse cx="1379.4" cy="414.2" rx="4.5" ry="2.6" fill="#4a662a" opacity="0.80"/><ellipse cx="1376.0" cy="413.2" rx="4.4" ry="3.8" fill="#5c7838" opacity="0.60"/><ellipse cx="1398.6" cy="380.5" rx="4.9" ry="3.6" fill="#4a662a" opacity="0.59"/><ellipse cx="1386.8" cy="400.4" rx="6.3" ry="3.1" fill="#5c7838" opacity="0.63"/><ellipse cx="1429.1" cy="421.6" rx="5.8" ry="5.7" fill="#94aa68" opacity="0.67"/><ellipse cx="1410.9" cy="403.2" rx="6.4" ry="4.3" fill="#4a662a" opacity="0.69"/><ellipse cx="1373.4" cy="403.8" rx="5.0" ry="4.7" fill="#94aa68" opacity="0.87"/><ellipse cx="1440.6" cy="425.8" rx="6.2" ry="5.4" fill="#3e5624" opacity="0.87"/><ellipse cx="1373.0" cy="406.4" rx="5.9" ry="6.0" fill="#7c9a4c" opacity="0.74"/><ellipse cx="1370.3" cy="405.7" rx="4.4" ry="5.3" fill="#3e5624" opacity="0.95"/><ellipse cx="1429.2" cy="421.8" rx="3.9" ry="3.3" fill="#4a662a" opacity="0.69"/><ellipse cx="1397.8" cy="380.4" rx="5.4" ry="2.5" fill="#3e5624" opacity="0.69"/><ellipse cx="1419.4" cy="388.3" rx="3.5" ry="3.9" fill="#3e5624" opacity="0.85"/><ellipse cx="1398.6" cy="398.8" rx="6.2" ry="3.7" fill="#3e5624" opacity="0.71"/><ellipse cx="1386.1" cy="383.5" rx="5.9" ry="3.1" fill="#4a662a" opacity="0.56"/><ellipse cx="1410.0" cy="393.6" rx="5.6" ry="4.6" fill="#94aa68" opacity="0.94"/><ellipse cx="1415.1" cy="398.7" rx="5.2" ry="3.0" fill="#5c7838" opacity="0.87"/><ellipse cx="1416.2" cy="406.7" rx="6.0" ry="3.0" fill="#4a662a" opacity="0.88"/><ellipse cx="1378.5" cy="408.4" rx="4.2" ry="3.3" fill="#94aa68" opacity="0.68"/><ellipse cx="1406.5" cy="384.2" rx="3.2" ry="5.1" fill="#6a883e" opacity="0.81"/><ellipse cx="1429.1" cy="407.5" rx="6.3" ry="5.6" fill="#4a662a" opacity="0.76"/><ellipse cx="1402.1" cy="402.4" rx="4.8" ry="3.1" fill="#5c7838" opacity="0.86"/><ellipse cx="1378.5" cy="414.0" rx="5.5" ry="2.9" fill="#5c7838" opacity="0.68"/><ellipse cx="1401.8" cy="406.4" rx="3.6" ry="2.2" fill="#94aa68" opacity=".6"/><ellipse cx="1382.4" cy="397.0" rx="2.1" ry="2.2" fill="#6a883e" opacity=".6"/><ellipse cx="1403.6" cy="411.8" rx="3.8" ry="2.9" fill="#94aa68" opacity=".6"/><ellipse cx="1420.9" cy="407.8" rx="2.4" ry="2.6" fill="#94aa68" opacity=".6"/><ellipse cx="1402.4" cy="404.4" rx="3.9" ry="3.4" fill="#7c9a4c" opacity=".6"/><ellipse cx="1418.8" cy="415.2" rx="2.4" ry="2.9" fill="#6a883e" opacity=".6"/><ellipse cx="1385.1" cy="403.5" rx="2.1" ry="2.5" fill="#5c7838" opacity=".6"/><ellipse cx="1388.9" cy="399.9" rx="2.2" ry="3.6" fill="#3e5624" opacity=".6"/><ellipse cx="1407.0" cy="401.5" rx="2.5" ry="2.3" fill="#6a883e" opacity=".6"/><ellipse cx="1389.2" cy="416.8" rx="2.8" ry="3.0" fill="#3e5624" opacity=".6"/><path d="M1352 424 Q1400 452 1449 424 L1449 470 L1352 470Z" fill="#878176"/><path d="M1354 421 Q1400 446 1447 421" fill="none" stroke="#27331a" stroke-width="7" opacity=".92"/><path d="M1362 426 Q1400 448 1440 426" fill="none" stroke="#4c6030" stroke-width="3" opacity=".8"/><ellipse cx="1376" cy="447" rx="15" ry="11" fill="#46433b"/><ellipse cx="1386" cy="460" rx="12" ry="6" fill="#5a564c"/><path d="M1398 440 Q1410 448 1404 470 L1428 462 Q1426 446 1410 437Z" fill="#a39d92"/><ellipse cx="1428" cy="442" rx="8" ry="6" fill="#6e7a4c"/></g><circle cx="1400.4" cy="421.8" r="46.5" fill="url(#hs2)"/></g><circle cx="1400.4" cy="421.8" r="46.2" fill="none" stroke="#d8e0d8" stroke-width=".8" opacity=".55"/></svg>
<svg style="left:1545.20px;top:219.30px;" width="24" height="24" viewBox="0 0 16 16"><circle cx="10.2" cy="5.8" r="5.6" fill="#f2f2f2"/><path d="M6.4 9.6 L1.8 14.2" stroke="#f2f2f2" stroke-width="2.3" stroke-linecap="round"/><path d="M10.2 3 V8.6 M7.4 5.8 H13" stroke="#2a2a2a" stroke-width="1.1"/></svg>
<svg style="left:1545.70px;top:258.00px;" width="23" height="23" viewBox="0 0 16 16"><ellipse cx="8.6" cy="11.2" rx="4.3" ry="3.7" fill="#f2f2f2"/><path d="M6.3 9.4 L5 3.4 M8.1 8.8 L7.9 1.9 M10 9 L10.9 2.7 M11.8 10.2 L13.6 5.2 M5.4 12 L2.1 8.8" stroke="#f2f2f2" stroke-width="1.9" stroke-linecap="round" fill="none"/></svg>
<svg style="left:1546.70px;top:297.70px;" width="21" height="21" viewBox="0 0 16 16"><circle cx="4.6" cy="4.4" r="2.7" fill="#f2f2f2"/><circle cx="10.4" cy="4" r="3.1" fill="#f2f2f2"/><path d="M2 7.8 H11.8 V9.2 L15.2 7.2 V14.6 L11.8 12.6 V14 H2Z" fill="#f2f2f2"/><circle cx="4.6" cy="4.4" r="0.9" fill="#222"/><circle cx="10.4" cy="4" r="1.1" fill="#222"/></svg>
<svg style="left:1546.70px;top:335.50px;" width="21" height="21" viewBox="0 0 16 16"><path d="M4 2.2 H12 L14.6 13.8 H1.4Z M3.2 5.8 H12.8 M2.4 9.6 H13.6 M6.6 2.2 L5.8 13.8 M9.4 2.2 L10.2 13.8" fill="none" stroke="#f2f2f2" stroke-width="1.1" stroke-linecap="round" stroke-linejoin="round" /></svg>
<div style="left:650px;top:38px;width:935px;height:31.5px;background:#383838;border-radius:6px 6px 0 0;"></div>
<div style="left:660px;top:43px;width:38px;height:23px;background:#2b2b2b;border:1px solid #404040;border-radius:5px;"></div>
<svg style="left:664.00px;top:44.50px;" width="20" height="20" viewBox="0 0 16 16"><path d="M2.2 7.2 H9 M1.2 11.4 H13.6 M5.4 5.6 L3.4 14.4 M11 9 L11.6 14.4" fill="none" stroke="#e6e6e6" stroke-width="1.15" stroke-linecap="round" stroke-linejoin="round" /><circle cx="10.9" cy="4.3" r="3.5" fill="#e6e6e6"/><path d="M8.9 4.2 A2.1 2.1 0 0 1 10.6 2.3" stroke="#2b2b2b" stroke-width=".8" fill="none"/></svg>
<svg style="left:681.50px;top:47.00px;" width="16" height="16" viewBox="0 0 16 16"><path d="M4.3 6.2 L8 9.9 L11.7 6.2" fill="none" stroke="#e6e6e6" stroke-width="1.45" stroke-linecap="round" stroke-linejoin="round" /></svg>
<svg style="left:712.50px;top:39.50px;" width="29" height="29" viewBox="0 0 16 16"><path d="M8 0.3 L10.3 3.6 H5.7Z M8 15.7 L10.3 12.4 H5.7Z M0.3 8 L3.6 5.7 V10.3Z M15.7 8 L12.4 5.7 V10.3Z" fill="#e6e6e6" /><path d="M8 4.6 V6 M8 10 V11.4 M4.6 8 H6 M10 8 H11.4" fill="none" stroke="#e6e6e6" stroke-width="1.2" stroke-linecap="round" stroke-linejoin="round" /></svg>
<div class="t" style="left:763px;top:43px;line-height:23px;">Orientation:</div>
<div style="left:876px;top:43px;width:124px;height:23px;background:#2b2b2b;border:1px solid #404040;border-radius:5px;"></div>
<svg style="left:880.00px;top:44.50px;" width="20" height="20" viewBox="0 0 16 16"><circle cx="6.2" cy="10" r="1.9" fill="#e6e6e6"/><path d="M6.2 6.6 V1.8 M4.6 3.4 L6.2 1.8 L7.8 3.4 M9.4 10 H14.4 M12.8 8.4 L14.4 10 L12.8 11.6 M4.4 11.8 L1.8 14.4 M1.8 12.2 V14.4 H4" fill="none" stroke="#e6e6e6" stroke-width="1" stroke-linecap="round" stroke-linejoin="round" /></svg>
<div class="t" style="left:908px;top:43px;line-height:23px;color:#e6e6e6;">Default</div>
<svg style="left:983.50px;top:47.00px;" width="16" height="16" viewBox="0 0 16 16"><path d="M4.3 6.2 L8 9.9 L11.7 6.2" fill="none" stroke="#e6e6e6" stroke-width="1.45" stroke-linecap="round" stroke-linejoin="round" /></svg>
<div class="t" style="left:1017px;top:43px;line-height:23px;">Drag:</div>
<div style="left:1073px;top:43px;width:114px;height:23px;background:#2b2b2b;border:1px solid #404040;border-radius:5px;"></div>
<div class="t" style="left:1082.5px;top:43px;line-height:23px;color:#e6e6e6;">Select Box</div>
<svg style="left:1170.50px;top:47.00px;" width="16" height="16" viewBox="0 0 16 16"><path d="M4.3 6.2 L8 9.9 L11.7 6.2" fill="none" stroke="#e6e6e6" stroke-width="1.45" stroke-linecap="round" stroke-linejoin="round" /></svg>
<div style="left:1207.5px;top:43px;width:98.5px;height:23px;background:#2b2b2b;border:1px solid #404040;border-radius:5px;"></div>
<svg style="left:1211.50px;top:44.50px;" width="20" height="20" viewBox="0 0 16 16"><path d="M3.2 1.8 V11.4 H14 M1.8 3.4 L3.2 1.8 L4.6 3.4 M12.4 10 L14 11.4 L12.4 12.8 M3.2 11.4 L10.8 4.6 M10.8 4.6 L8.4 5 M10.8 4.6 L10.5 7" fill="none" stroke="#e6e6e6" stroke-width="1" stroke-linecap="round" stroke-linejoin="round" /><circle cx="3.2" cy="11.6" r="1.3" fill="none" stroke="#e6e6e6" stroke-width="1"/></svg>
<div class="t" style="left:1239px;top:43px;line-height:23px;color:#e6e6e6;">Global</div>
<svg style="left:1289.50px;top:47.00px;" width="16" height="16" viewBox="0 0 16 16"><path d="M4.3 6.2 L8 9.9 L11.7 6.2" fill="none" stroke="#e6e6e6" stroke-width="1.45" stroke-linecap="round" stroke-linejoin="round" /></svg>
<div style="left:1314px;top:43px;width:38px;height:23px;background:#2b2b2b;border:1px solid #404040;border-radius:5px;"></div>
<svg style="left:1335.50px;top:47.00px;" width="16" height="16" viewBox="0 0 16 16"><path d="M4.3 6.2 L8 9.9 L11.7 6.2" fill="none" stroke="#e6e6e6" stroke-width="1.45" stroke-linecap="round" stroke-linejoin="round" /></svg>
<svg style="left:1317.50px;top:44.00px;" width="21" height="21" viewBox="0 0 16 16"><circle cx="6" cy="10" r="3.6" fill="none" stroke="#e6e6e6" stroke-width="1.2"/><circle cx="10.4" cy="6" r="3.6" fill="none" stroke="#e6e6e6" stroke-width="1.2"/><circle cx="8.2" cy="8" r="1.2" fill="#e6e6e6"/></svg>
<div style="left:1360px;top:43px;width:24px;height:23px;background:#545454;border-radius:4px 0 0 4px;"></div>
<svg style="left:1362.50px;top:45.00px;" width="19" height="19" viewBox="0 0 16 16"><path d="M3.2 9.6 L7.8 4.6 A3.6 3.6 0 0 1 13 9.8 L8.4 14.4 L6.5 12.6 L10.8 8.2 A1.1 1.1 0 0 0 9.4 6.8 L5.2 11.4Z" fill="none" stroke="#a8a8a8" stroke-width="1.1" stroke-linecap="round" stroke-linejoin="round" /></svg>
<div style="left:1384px;top:43px;width:38.5px;height:23px;background:#2b2b2b;border:1px solid #404040;border-left:none;border-radius:0 4px 4px 0;"></div>
<svg style="left:1385.50px;top:43.50px;" width="22" height="22" viewBox="0 0 16 16"><rect x="2.6" y="2.6" width="3.8" height="3.8" rx="0" fill="#e6e6e6"/><rect x="2.6" y="9.6" width="3.8" height="3.8" rx="0" fill="#e6e6e6"/><rect x="9.6" y="2.6" width="3.8" height="3.8" rx="0" fill="#e6e6e6"/><rect x="9.6" y="9.6" width="3.8" height="3.8" rx="0" fill="#e6e6e6"/></svg>
<svg style="left:1405.00px;top:47.00px;" width="16" height="16" viewBox="0 0 16 16"><path d="M4.3 6.2 L8 9.9 L11.7 6.2" fill="none" stroke="#e6e6e6" stroke-width="1.45" stroke-linecap="round" stroke-linejoin="round" /></svg>
<div style="left:1431px;top:43px;width:24px;height:23px;background:#484848;border-radius:4px 0 0 4px;"></div>
<svg style="left:1433.50px;top:45.00px;" width="19" height="19" viewBox="0 0 16 16"><circle cx="8" cy="8" r="5.6" fill="none" stroke="#8a8a8a" stroke-width="1.1"/><circle cx="8" cy="8" r="1.7" fill="#8a8a8a"/></svg>
<div style="left:1455px;top:43px;width:39px;height:23px;background:#2a2a2a;border:1px solid #333;border-left:none;border-radius:0 4px 4px 0;"></div>
<svg style="left:1458.00px;top:45.00px;" width="19" height="19" viewBox="0 0 16 16"><path d="M1.8 13 C6 13 6 3 8 3 C10 3 10 13 14.2 13" fill="none" stroke="#8a8a8a" stroke-width="1.1" stroke-linecap="round" stroke-linejoin="round" /></svg>
<svg style="left:1475.50px;top:47.00px;" width="16" height="16" viewBox="0 0 16 16"><path d="M4.3 6.2 L8 9.9 L11.7 6.2" fill="none" stroke="#555" stroke-width="1.45" stroke-linecap="round" stroke-linejoin="round" /></svg>
<div style="left:1514px;top:43px;width:71px;height:23px;background:#2b2b2b;border:1px solid #404040;border-right:none;border-radius:4px 0 0 4px;"></div>
<div class="t" style="left:1524px;top:43px;line-height:23px;">Options</div>
<svg style="left:1577px;top:49px;overflow:hidden" width="8" height="12" viewBox="0 0 8 12"><path d="M2.5 4 L6 7.5 L9.5 4" stroke="#e6e6e6" stroke-width="1.3" fill="none"/></svg>
<div style="left:660.5px;top:74px;width:136px;height:23px;background:rgba(29,29,29,.93);border:1px solid rgba(70,70,70,.6);border-radius:4px;"></div>
<svg style="left:664.50px;top:75.50px;" width="20" height="20" viewBox="0 0 16 16"><rect x="4.2" y="4.2" width="7.6" height="7.6" rx="0" fill="#e6e6e6"/><path d="M1.6 4.6 V1.6 H4.6 M11.4 1.6 H14.4 V4.6 M14.4 11.4 V14.4 H11.4 M4.6 14.4 H1.6 V11.4" fill="none" stroke="#e6e6e6" stroke-width="1.1" stroke-linecap="round" stroke-linejoin="round" /></svg>
<div class="t" style="left:692px;top:74px;line-height:23px;">Object Mode</div>
<svg style="left:780.00px;top:78.00px;" width="16" height="16" viewBox="0 0 16 16"><path d="M4.3 6.2 L8 9.9 L11.7 6.2" fill="none" stroke="#e6e6e6" stroke-width="1.45" stroke-linecap="round" stroke-linejoin="round" /></svg>
<div style="left:804px;top:74px;width:47.5px;height:23px;background:rgba(72,80,86,.82);border-radius:4px;"></div>
<div class="t" style="left:804px;top:74px;width:47.5px;text-align:center;line-height:23px;">View</div>
<div style="left:854px;top:74px;width:55.5px;height:23px;background:rgba(72,80,86,.82);border-radius:4px;"></div>
<div class="t" style="left:854px;top:74px;width:55.5px;text-align:center;line-height:23px;">Select</div>
<div style="left:912px;top:74px;width:41.5px;height:23px;background:rgba(72,80,86,.82);border-radius:4px;"></div>
<div class="t" style="left:912px;top:74px;width:41.5px;text-align:center;line-height:23px;">Add</div>
<div style="left:956px;top:74px;width:57.5px;height:23px;background:rgba(72,80,86,.82);border-radius:4px;"></div>
<div class="t" style="left:956px;top:74px;width:57.5px;text-align:center;line-height:23px;">Object</div>
<div style="left:1265px;top:74px;width:39.5px;height:23px;background:rgba(26,26,26,.94);border-radius:4px;"></div>
<svg style="left:1269.00px;top:75.50px;" width="20" height="20" viewBox="0 0 16 16"><path d="M1.5 6.5 L5 15 L6.8 11.6 L10.6 11 Z" fill="#ffffff"/><path d="M6 5.2 C8 1.6 13 1.6 15 5.2 C13 8.6 8 8.6 6 5.2Z" fill="#ffffff"/><circle cx="10.5" cy="5" r="1.9" fill="#1d1d1d"/><circle cx="10.5" cy="5" r="0.8" fill="#ffffff"/></svg>
<svg style="left:1288.00px;top:78.00px;" width="16" height="16" viewBox="0 0 16 16"><path d="M4.3 6.2 L8 9.9 L11.7 6.2" fill="none" stroke="#e6e6e6" stroke-width="1.45" stroke-linecap="round" stroke-linejoin="round" /></svg>
<div style="left:1311px;top:74px;width:24px;height:23px;background:#5680c2;border-radius:4px 0 0 4px;"></div>
<svg style="left:1313.50px;top:76.00px;" width="19" height="19" viewBox="0 0 16 16"><path d="M4.6 11.4 L12.8 3.2 M8.8 3 H13 V7.2 M2.2 5.2 C7 5.2 10.8 9 10.8 13.8" fill="none" stroke="#ffffff" stroke-width="1.15" stroke-linecap="round" stroke-linejoin="round" /><circle cx="3.4" cy="12.6" r="1.7" fill="none" stroke="#ffffff" stroke-width="1.1"/></svg>
<div style="left:1335px;top:74px;width:25.5px;height:23px;background:rgba(26,26,26,.94);border-radius:0 4px 4px 0;"></div>
<svg style="left:1339.50px;top:78.00px;" width="16" height="16" viewBox="0 0 16 16"><path d="M4.3 6.2 L8 9.9 L11.7 6.2" fill="none" stroke="#e6e6e6" stroke-width="1.45" stroke-linecap="round" stroke-linejoin="round" /></svg>
<div style="left:1367px;top:74px;width:24px;height:23px;background:#5680c2;border-radius:4px 0 0 4px;"></div>
<svg style="left:1369.50px;top:76.00px;" width="19" height="19" viewBox="0 0 16 16"><circle cx="9.8" cy="6.2" r="4.3" fill="#ffffff"/><path d="M6.6 5.2 A4.6 4.6 0 1 0 10.8 11.6" fill="none" stroke="#ffffff" stroke-width="1.2"/><path d="M7 9.2 L9 11.2" stroke="#5680c2" stroke-width="1"/></svg>
<div style="left:1391px;top:74px;width:25.5px;height:23px;background:rgba(26,26,26,.94);border-radius:0 4px 4px 0;"></div>
<svg style="left:1395.50px;top:78.00px;" width="16" height="16" viewBox="0 0 16 16"><path d="M4.3 6.2 L8 9.9 L11.7 6.2" fill="none" stroke="#e6e6e6" stroke-width="1.45" stroke-linecap="round" stroke-linejoin="round" /></svg>
<div style="left:1423px;top:74px;width:24.5px;height:23px;background:rgba(120,124,126,.75);border-radius:4px;"></div>
<svg style="left:1425.70px;top:76.00px;" width="19" height="19" viewBox="0 0 16 16"><rect x="2" y="5" width="9" height="9" rx="1" fill="none" stroke="#9aa0a2" stroke-width="1.1"/><rect x="5" y="2" width="9" height="9" rx="1" fill="none" stroke="#9aa0a2" stroke-width="1.1"/><path d="M6.5 7 v3 h3" fill="none" stroke="#9aa0a2" stroke-width="0.9" stroke-linecap="round" stroke-linejoin="round" /></svg>
<div style="left:1454px;top:74px;width:121.5px;height:23px;background:rgba(26,26,26,.94);border-radius:4px;"></div>
<div style="left:1455px;top:75px;width:23.5px;height:21px;background:#4d4d4d;border-radius:3px 0 0 3px;"></div>
<div style="left:1479px;top:75px;width:23.5px;height:21px;background:#4d4d4d;"></div>
<div style="left:1502.5px;top:74px;width:24px;height:23px;background:#5680c2;"></div>
<div style="left:1527px;top:75px;width:23px;height:21px;background:#4d4d4d;"></div>
<svg style="left:1457.00px;top:76.00px;" width="19" height="19" viewBox="0 0 16 16"><circle cx="8" cy="8" r="6" fill="none" stroke="#e6e6e6" stroke-width="1.1"/><path d="M2 8 H14 M8 2 V14 M8 2 C4 5 4 11 8 14 M8 2 C12 5 12 11 8 14" fill="none" stroke="#e6e6e6" stroke-width="1" stroke-linecap="round" stroke-linejoin="round" /></svg>
<svg style="left:1481.00px;top:76.00px;" width="19" height="19" viewBox="0 0 16 16"><circle cx="8" cy="8" r="6.2" fill="#e0e0e0"/></svg>
<svg style="left:1505.00px;top:76.00px;" width="19" height="19" viewBox="0 0 16 16"><circle cx="8" cy="8" r="6" fill="none" stroke="#ffffff" stroke-width="1.2"/><path d="M8 2 A6 6 0 0 0 3 11.4 L8 8Z" fill="#ffffff"/><path d="M8 8 L13.6 10 A6 6 0 0 1 3.2 11.6Z" fill="#ffffff" opacity=".0"/><path d="M8 2 V8 L13.4 10.6 A6 6 0 0 1 2.9 11.2 A6 6 0 0 1 8 2Z" fill="#ffffff"/></svg>
<svg style="left:1529.00px;top:76.00px;" width="19" height="19" viewBox="0 0 16 16"><circle cx="8" cy="8" r="6" fill="none" stroke="#d0d0d0" stroke-width="1.2"/><path d="M4.2 7.4 A4 4 0 0 1 7.6 4" fill="none" stroke="#d0d0d0" stroke-width="1.1"/><path d="M3.2 11.6 A6 6 0 0 0 12.8 11.6 L11.6 10.6 L10.4 12 L9 10.9 L7.6 12.2 L6.2 11 L4.6 12Z" fill="#d0d0d0" opacity=".8"/></svg>
<svg style="left:1555.00px;top:78.00px;" width="16" height="16" viewBox="0 0 16 16"><path d="M4.3 6.2 L8 9.9 L11.7 6.2" fill="none" stroke="#e6e6e6" stroke-width="1.45" stroke-linecap="round" stroke-linejoin="round" /></svg>
<div class="ts" style="left:661px;top:110.0px;line-height:24px;">User Perspective</div>
<div class="ts" style="left:661px;top:134.0px;line-height:24px;">(1) Tahu | Body model</div>
<div style="left:650px;top:113px;width:7px;height:17px;background:rgba(60,60,60,.7);border-radius:0 3px 3px 0;"></div>
<svg style="left:650px;top:116.5px;" width="7" height="10" viewBox="0 0 7 10"><path d="M1.5 1 L5.5 5 L1.5 9" stroke="#9a9a9a" stroke-width="1.2" fill="none"/></svg>
<div style="left:1578px;top:119px;width:7px;height:17px;background:rgba(90,90,90,.6);border-radius:3px 0 0 3px;"></div>
<svg style="left:1578px;top:122.5px;" width="7" height="10" viewBox="0 0 7 10"><path d="M5.5 1 L1.5 5 L5.5 9" stroke="#aaa" stroke-width="1.2" fill="none"/></svg>
<!-- s_outliner.py -->
<div style="left:1588px;top:38px;width:331px;height:133px;background:#383838;border-radius:6px 0 0 6px;overflow:hidden;"><div style="left:0;top:0;width:331px;height:31.5px;background:#383838;"></div><div style="left:0;top:34px;width:331px;height:24.5px;background:#383838;"></div><div style="left:0;top:58.5px;width:331px;height:24.5px;background:#3b3b3b;"></div><div style="left:0;top:83px;width:331px;height:24.5px;background:#383838;"></div><div style="left:0;top:107.5px;width:331px;height:25.5px;background:#3b3b3b;"></div></div>
<div style="left:1599px;top:43px;width:38px;height:23px;background:#2b2b2b;border:1px solid #404040;border-radius:5px;"></div>
<svg style="left:1603.00px;top:44.50px;" width="20" height="20" viewBox="0 0 16 16"><rect x="1.6" y="1.6" width="4.6" height="3.2" rx="0" fill="#e6e6e6"/><rect x="7.4" y="6.2" width="7" height="3" rx="0" fill="#e6e6e6"/><rect x="7.4" y="11.2" width="7" height="3" rx="0" fill="#e6e6e6"/><path d="M3.8 5 V12.8 H7 M3.8 7.8 H7" fill="none" stroke="#e6e6e6" stroke-width="1.1" stroke-linecap="round" stroke-linejoin="round" /></svg>
<svg style="left:1620.50px;top:47.00px;" width="16" height="16" viewBox="0 0 16 16"><path d="M4.3 6.2 L8 9.9 L11.7 6.2" fill="none" stroke="#e6e6e6" stroke-width="1.45" stroke-linecap="round" stroke-linejoin="round" /></svg>
<div style="left:1645px;top:43px;width:38.5px;height:23px;background:#2b2b2b;border:1px solid #404040;border-radius:5px;"></div>
<svg style="left:1649.00px;top:44.50px;" width="20" height="20" viewBox="0 0 16 16"><rect x="5.2" y="1.8" width="9" height="9" rx="0.5" fill="none" stroke="#e6e6e6" stroke-width="1.1"/><path d="M5.8 10.2 L8.8 5.6 L11.8 10.2Z" fill="#e6e6e6"/><circle cx="11.6" cy="4.6" r="1.1" fill="#e6e6e6"/><path d="M3.4 4.4 V12.6 H11.6 M1.6 6.4 V14.4 H9.6" fill="none" stroke="#e6e6e6" stroke-width="1.1" stroke-linecap="round" stroke-linejoin="round" /></svg>
<svg style="left:1667.00px;top:47.00px;" width="16" height="16" viewBox="0 0 16 16"><path d="M4.3 6.2 L8 9.9 L11.7 6.2" fill="none" stroke="#e6e6e6" stroke-width="1.45" stroke-linecap="round" stroke-linejoin="round" /></svg>
<div style="left:1703.5px;top:43px;width:141.5px;height:23px;background:#1d1d1d;border-radius:4px;"></div>
<svg style="left:1708.00px;top:44.50px;" width="19" height="19" viewBox="0 0 16 16"><circle cx="9.5" cy="6.3" r="4.1" fill="none" stroke="#e6e6e6" stroke-width="1.2"/><path d="M6.6 9.3 L2 14" fill="none" stroke="#e6e6e6" stroke-width="1.4" stroke-linecap="round" stroke-linejoin="round" /></svg>
<div style="left:1866px;top:43px;width:38px;height:23px;background:#2b2b2b;border:1px solid #404040;border-radius:5px;"></div>
<svg style="left:1870.00px;top:44.50px;" width="20" height="20" viewBox="0 0 16 16"><path d="M2.2 3 H13.8 L9.6 8.2 V12.2 L6.4 13.6 V8.2 Z" fill="none" stroke="#e6e6e6" stroke-width="1.2" stroke-linecap="round" stroke-linejoin="round" /></svg>
<svg style="left:1887.50px;top:47.00px;" width="16" height="16" viewBox="0 0 16 16"><path d="M4.3 6.2 L8 9.9 L11.7 6.2" fill="none" stroke="#e6e6e6" stroke-width="1.45" stroke-linecap="round" stroke-linejoin="round" /></svg>
<div style="left:1912px;top:43px;width:10px;height:23px;background:#545454;border-radius:4px 0 0 4px;"></div>
<svg style="left:1915px;top:48px;overflow:hidden" width="4" height="13" viewBox="0 0 4 13"><path d="M0.6 2 V12 M0.6 2 H4" stroke="#ddd" stroke-width="1.2" fill="none"/></svg>
<svg style="left:1615.00px;top:74.00px;" width="20" height="20" viewBox="0 0 16 16"><rect x="1.8" y="2" width="12.4" height="3.4" rx="0" fill="#c4c4c4"/><path d="M2.6 6.4 H13.4 V14 H2.6Z M6 8.4 V10 H10 V8.4Z" fill="#c4c4c4" fill-rule="evenodd"/></svg>
<div class="t" style="left:1643px;top:72.5px;line-height:24px;color:#cccccc;">Scene Collection</div>
<svg style="left:1620px;top:104px;" width="9" height="9" viewBox="0 0 9 9"><path d="M0.5 1 H8.5 L4.5 8.5Z" fill="#c8c8c8"/></svg>
<svg style="left:1640.00px;top:98.50px;" width="20" height="20" viewBox="0 0 16 16"><rect x="1.8" y="2" width="12.4" height="3.4" rx="0" fill="#c4c4c4"/><path d="M2.6 6.4 H13.4 V14 H2.6Z M6 8.4 V10 H10 V8.4Z" fill="#c4c4c4" fill-rule="evenodd"/></svg>
<div class="t" style="left:1668px;top:97.0px;line-height:24px;color:#cccccc;">Collection</div>
<svg style="left:1839.25px;top:99.75px;" width="16.5" height="16.5" viewBox="0 0 16 16"><rect x="1.6" y="1.8" width="12.8" height="12.6" rx="1.6" fill="#f0f0f0"/><path d="M4.2 8 L7 11 L12 4.6" fill="none" stroke="#2b2b2b" stroke-width="2" stroke-linecap="round" stroke-linejoin="round"/></svg>
<svg style="left:1862.50px;top:100.00px;" width="18" height="18" viewBox="0 0 16 16"><path d="M2 2 L14.4 6.8 L9.2 8.6 L7.2 14.4Z" fill="#f4f4f4"/></svg>
<svg style="left:1889.00px;top:98.50px;" width="18" height="18" viewBox="0 0 16 16"><path d="M0.8 8 C3.6 2.6 12.4 2.6 15.2 8 C12.4 13.4 3.6 13.4 0.8 8Z" fill="#f4f4f4"/><circle cx="8" cy="7.6" r="3.3" fill="#2b2b2b"/><circle cx="8" cy="7.6" r="1.5" fill="#f4f4f4"/></svg>
<div style="left:1624px;top:126px;width:1px;height:45px;background:#8a8a8a;"></div>
<svg style="left:1646px;top:129px;" width="9" height="9" viewBox="0 0 9 9"><path d="M1 0.5 V8.5 L8.5 4.5Z" fill="#c8c8c8"/></svg>
<svg style="left:1665.00px;top:122.50px;" width="20" height="20" viewBox="0 0 16 16"><circle cx="4.4" cy="4.2" r="2.6" fill="#e59650"/><circle cx="10.2" cy="3.8" r="3" fill="#e59650"/><path d="M2 7.4 H11.6 V9 L15 7 V14.4 L11.6 12.4 V14 H2Z" fill="#e59650"/><circle cx="4.4" cy="4.2" r="0.9" fill="#2b2b2b"/><circle cx="10.2" cy="3.8" r="1" fill="#2b2b2b"/></svg>
<div class="t" style="left:1693px;top:121.5px;line-height:24px;color:#cccccc;">Camera</div>
<div style="left:1769px;top:121px;width:25px;height:23px;background:#4a4f4a;border-radius:4px;"></div>
<svg style="left:1772.00px;top:123.00px;" width="19" height="19" viewBox="0 0 16 16"><path d="M2.4 8 H11 V9.6 L13.8 8.2 V13.6 L11 12.2 V13.8 H2.4Z" fill="none" stroke="#6fd48a" stroke-width="1.1" stroke-linecap="round" stroke-linejoin="round" /><circle cx="4.6" cy="4.8" r="2.3" fill="none" stroke="#6fd48a" stroke-width="1.1"/><circle cx="9.8" cy="4.4" r="2.7" fill="none" stroke="#6fd48a" stroke-width="1.1"/></svg>
<svg style="left:1862.50px;top:124.50px;" width="18" height="18" viewBox="0 0 16 16"><path d="M2 2 L14.4 6.8 L9.2 8.6 L7.2 14.4Z" fill="#f4f4f4"/></svg>
<svg style="left:1889.00px;top:123.00px;" width="18" height="18" viewBox="0 0 16 16"><path d="M0.8 8 C3.6 2.6 12.4 2.6 15.2 8 C12.4 13.4 3.6 13.4 0.8 8Z" fill="#f4f4f4"/><circle cx="8" cy="7.6" r="3.3" fill="#2b2b2b"/><circle cx="8" cy="7.6" r="1.5" fill="#f4f4f4"/></svg>
<svg style="left:1646px;top:153.5px;" width="9" height="9" viewBox="0 0 9 9"><path d="M1 0.5 V8.5 L8.5 4.5Z" fill="#c8c8c8"/></svg>
<svg style="left:1665.00px;top:147.00px;" width="20" height="20" viewBox="0 0 16 16"><path d="M8 1.2 A5.4 5.4 0 0 1 11.4 10.6 V11.6 H4.6 V10.6 A5.4 5.4 0 0 1 8 1.2Z" fill="#e59650"/><path d="M5.4 13 H10.6 M6.2 14.8 H9.8" fill="none" stroke="#e59650" stroke-width="1.2" stroke-linecap="round" stroke-linejoin="round" /><path d="M5.6 6.2 L6.6 7.6 H9.4 L10.4 6.2 M7 8 V11 M9 8 V11" stroke="#2b2b2b" stroke-width="0.9" fill="none"/></svg>
<div class="t" style="left:1693px;top:146.0px;line-height:24px;color:#cccccc;">Light</div>
<svg style="left:1751.50px;top:148.00px;" width="19" height="19" viewBox="0 0 16 16"><circle cx="8" cy="7.4" r="5.4" fill="none" stroke="#58c478" stroke-width="1.1"/><circle cx="8" cy="7" r="1.1" fill="#58c478"/><path d="M8 8.4 V11 M6.4 14.4 H9.6 M8 12.6 V14.4" fill="none" stroke="#58c478" stroke-width="1.1" stroke-linecap="round" stroke-linejoin="round" /></svg>
<svg style="left:1862.50px;top:149.00px;" width="18" height="18" viewBox="0 0 16 16"><path d="M2 2 L14.4 6.8 L9.2 8.6 L7.2 14.4Z" fill="#f4f4f4"/></svg>
<svg style="left:1889.00px;top:147.50px;" width="18" height="18" viewBox="0 0 16 16"><path d="M0.8 8 C3.6 2.6 12.4 2.6 15.2 8 C12.4 13.4 3.6 13.4 0.8 8Z" fill="#f4f4f4"/><circle cx="8" cy="7.6" r="3.3" fill="#2b2b2b"/><circle cx="8" cy="7.6" r="1.5" fill="#f4f4f4"/></svg>
<!-- s_props.py -->
<div style="left:1588px;top:174px;width:331px;height:805px;background:#424242;border-radius:6px 0 0 6px;overflow:hidden;"><div style="left:0;top:0;width:331px;height:31px;background:#444444;"></div><div style="left:0;top:31px;width:35px;height:774px;background:#242424;"></div><div style="left:35px;top:31px;width:296px;height:71px;background:#383838;"></div><div style="left:35px;top:342px;width:296px;height:374px;background:#383838;"></div><div style="left:35px;top:479.5px;width:296px;height:100.5px;background:#2f2f2f;"></div><div style="left:35px;top:639.5px;width:296px;height:76.5px;background:#2f2f2f;"></div><div style="left:321px;top:270px;width:8px;height:540px;background:rgba(120,120,120,.28);border-radius:4px;"></div></div>
<div style="left:1599px;top:178px;width:38px;height:23px;background:#303030;border:1px solid #4a4a4a;border-radius:5px;"></div>
<svg style="left:1620.50px;top:182.00px;" width="16" height="16" viewBox="0 0 16 16"><path d="M4.3 6.2 L8 9.9 L11.7 6.2" fill="none" stroke="#e6e6e6" stroke-width="1.45" stroke-linecap="round" stroke-linejoin="round" /></svg>
<svg style="left:1602.00px;top:178.50px;" width="22" height="22" viewBox="0 0 16 16"><rect x="1.4" y="1.6" width="13.2" height="5.6" rx="2.8" fill="#e6e6e6"/><rect x="1.4" y="8.8" width="13.2" height="5.6" rx="2.8" fill="#e6e6e6"/><rect x="7.6" y="3" width="5.6" height="2.8" rx="1.4" fill="#2b2b2b"/><rect x="2.8" y="10.2" width="5.6" height="2.8" rx="1.4" fill="#2b2b2b"/></svg>
<div style="left:1677px;top:178px;width:141px;height:23px;background:#1d1d1d;border-radius:4px;"></div>
<svg style="left:1681.50px;top:179.50px;" width="19" height="19" viewBox="0 0 16 16"><circle cx="9.5" cy="6.3" r="4.1" fill="none" stroke="#e6e6e6" stroke-width="1.2"/><path d="M6.6 9.3 L2 14" fill="none" stroke="#e6e6e6" stroke-width="1.4" stroke-linecap="round" stroke-linejoin="round" /></svg>
<div style="left:1623px;top:205px;width:296px;height:8px;overflow:hidden;"><div class="t" style="left:63px;top:-13px;line-height:24px;">Adaptive Sampling</div><div style="left:43px;top:-10px;width:15px;height:15px;background:#666;border-radius:3px;"></div></div>
<div style="left:1590px;top:216px;width:33px;height:33px;background:#303030;border-radius:4px 0 0 4px;"></div>
<svg style="left:1596.50px;top:222.50px;" width="20" height="20" viewBox="0 0 16 16"><path d="M4 2 V7.4" fill="none" stroke="#cfcfcf" stroke-width="1.4" stroke-linecap="round" stroke-linejoin="round" /><rect x="2.6" y="8.6" width="2.8" height="5.6" rx="1.2" fill="#cfcfcf"/><path d="M9 1.8 V5 L10.4 6.6 V13.4 a1.1 1.1 0 0 0 2.2 0 V6.6 L14 5 V1.8 L12.6 1.8 V4.4 H10.4 V1.8Z" fill="#cfcfcf"/></svg>
<div style="left:1590px;top:260px;width:33px;height:33px;background:#474747;border-radius:4px 0 0 4px;"></div>
<svg style="left:1596.50px;top:266.50px;" width="20" height="20" viewBox="0 0 16 16"><path d="M1.8 5 H4.4 V3 H9 V5 H14.2 V14 H1.8Z" fill="#f0f0f0"/><path d="M3.4 8 H10.4 M3.4 10 H10.4 M3.4 12 H10.4" stroke="#484848" stroke-width="1"/><rect x="11.4" y="6.4" width="1.8" height="1.8" fill="#484848"/><rect x="11.4" y="10.4" width="1.8" height="1.8" fill="#484848"/></svg>
<div style="left:1590px;top:295px;width:33px;height:33px;background:#303030;border-radius:4px 0 0 4px;"></div>
<svg style="left:1596.50px;top:301.50px;" width="20" height="20" viewBox="0 0 16 16"><path d="M1.6 2 H14.4 V8 H12.4 V5.8 H3.6 V8 H1.6Z" fill="#cfcfcf"/><rect x="4.4" y="7" width="7.2" height="7.2" fill="#cfcfcf"/><path d="M5 13.4 L8 9.2 L11 13.4Z" fill="#303030"/></svg>
<div style="left:1590px;top:330px;width:33px;height:33px;background:#303030;border-radius:4px 0 0 4px;"></div>
<svg style="left:1596.50px;top:336.50px;" width="20" height="20" viewBox="0 0 16 16"><rect x="5.2" y="1.8" width="9" height="9" rx="0.5" fill="none" stroke="#cfcfcf" stroke-width="1.1"/><path d="M5.8 10.2 L8.8 5.6 L11.8 10.2Z" fill="#cfcfcf"/><circle cx="11.6" cy="4.6" r="1.1" fill="#cfcfcf"/><path d="M3.4 4.4 V12.6 H11.6 M1.6 6.4 V14.4 H9.6" fill="none" stroke="#cfcfcf" stroke-width="1.1" stroke-linecap="round" stroke-linejoin="round" /></svg>
<div style="left:1590px;top:365px;width:33px;height:33px;background:#303030;border-radius:4px 0 0 4px;"></div>
<svg style="left:1596.50px;top:371.50px;" width="20" height="20" viewBox="0 0 16 16"><path d="M4.6 1.6 L7.4 8.6 A2.9 2.9 0 1 1 1.8 8.6Z" fill="#cfcfcf" /><path d="M8.2 4.4 L9.8 8 H6.9Z" fill="#cfcfcf" /><circle cx="11.6" cy="3.6" r="1.6" fill="#cfcfcf"/><circle cx="10.6" cy="11" r="3.1" fill="none" stroke="#cfcfcf" stroke-width="1.1"/><path d="M9 10 A1.8 1.8 0 0 1 10.4 9" fill="none" stroke="#cfcfcf" stroke-width="0.8" stroke-linecap="round" stroke-linejoin="round" /></svg>
<div style="left:1590px;top:400px;width:33px;height:33px;background:#303030;border-radius:4px 0 0 4px;"></div>
<svg style="left:1596.50px;top:406.50px;" width="20" height="20" viewBox="0 0 16 16"><circle cx="8" cy="8" r="6.2" fill="none" stroke="#e5585c" stroke-width="1.2"/><path d="M4 4.4 C6 3.2 7.4 4.4 7 6 C6.6 7.6 4.6 7.4 4 9 C3.6 10 4.4 11 5 12 C3 11 1.9 9.6 1.9 8 C1.9 6.6 2.8 5.2 4 4.4Z M9.4 8.4 C11 8 12.4 9 12.4 10.2 C12 11.6 10.8 12.8 9.6 13.4 C9.8 12 8.6 11.4 8.4 10 C8.4 9.2 8.6 8.6 9.4 8.4Z M10 2.4 C11.6 3 13 4.2 13.6 5.6 C12.6 5.8 11.6 5.4 11 4.6Z" fill="#e5585c"/><path d="M1.4 11.4 C4 13.6 12 6 14.6 3.8" fill="none" stroke="#e5585c" stroke-width="0" stroke-linecap="round" stroke-linejoin="round" /></svg>
<div style="left:1590px;top:444px;width:33px;height:33px;background:#303030;border-radius:4px 0 0 4px;"></div>
<svg style="left:1596.50px;top:450.50px;" width="20" height="20" viewBox="0 0 16 16"><rect x="4.4" y="4.4" width="7.2" height="7.2" rx="0" fill="#e8964e"/><path d="M1.8 4.8 V1.8 H4.8 M11.2 1.8 H14.2 V4.8 M14.2 11.2 V14.2 H11.2 M4.8 14.2 H1.8 V11.2" fill="none" stroke="#e8964e" stroke-width="1.1" stroke-linecap="round" stroke-linejoin="round" /></svg>
<div style="left:1590px;top:479px;width:33px;height:33px;background:#303030;border-radius:4px 0 0 4px;"></div>
<svg style="left:1596.50px;top:485.50px;" width="20" height="20" viewBox="0 0 16 16"><path d="M2.8 13.2 L9 7" stroke="#6a9fe0" stroke-width="2.7" stroke-linecap="round" fill="none"/><circle cx="10.9" cy="5.1" r="3.8" fill="#6a9fe0"/><path d="M10.6 5.4 L12.2 0.4 L16 0.4 L16 4.6 Z" fill="#303030"/><path d="M11.6 4.4 L13.4 2.6" stroke="#303030" stroke-width="2.2" stroke-linecap="round"/></svg>
<div style="left:1590px;top:514px;width:33px;height:33px;background:#303030;border-radius:4px 0 0 4px;"></div>
<svg style="left:1596.50px;top:520.50px;" width="20" height="20" viewBox="0 0 16 16"><circle cx="3.4" cy="3.2" r="1.9" fill="#6a9fe0"/><circle cx="3.4" cy="12.4" r="1.2" fill="#6a9fe0"/><circle cx="13" cy="3" r="1" fill="#6a9fe0"/><circle cx="12.8" cy="12" r="1.7" fill="#6a9fe0"/><path d="M3.4 3.2 V12.4 M3.4 3.2 H13 M3.4 3.2 L12.8 12" fill="none" stroke="#6a9fe0" stroke-width="1" stroke-linecap="round" stroke-linejoin="round" /></svg>
<div style="left:1590px;top:549px;width:33px;height:33px;background:#303030;border-radius:4px 0 0 4px;"></div>
<svg style="left:1596.50px;top:555.50px;" width="20" height="20" viewBox="0 0 16 16"><path d="M12.2 11.6 A5.6 5.6 0 1 1 10.8 3.2" fill="none" stroke="#6a9fe0" stroke-width="1.2"/><circle cx="8" cy="8" r="2.4" fill="#6a9fe0"/><circle cx="12.8" cy="3.4" r="1.4" fill="#6a9fe0"/></svg>
<div style="left:1590px;top:584px;width:33px;height:33px;background:#303030;border-radius:4px 0 0 4px;"></div>
<svg style="left:1596.50px;top:590.50px;" width="20" height="20" viewBox="0 0 16 16"><path d="M13.4 2 C15 3.6 14.6 5.6 13 7 C13 10 11 13.6 7 14 C3.6 14.2 1.4 11.4 1.8 8.4 C2.2 5 5.4 3.4 8.6 3.2 C10 1.6 12 0.8 13.4 2Z" fill="none" stroke="#6a9fe0" stroke-width="1.2"/><circle cx="7" cy="9" r="3" fill="none" stroke="#6a9fe0" stroke-width="1.2"/><circle cx="7" cy="9" r="1.1" fill="#6a9fe0"/></svg>
<div style="left:1590px;top:619px;width:33px;height:33px;background:#303030;border-radius:4px 0 0 4px;"></div>
<svg style="left:1596.50px;top:625.50px;" width="20" height="20" viewBox="0 0 16 16"><path d="M3 3 H13 L8 13Z" fill="none" stroke="#5fd070" stroke-width="1.2" stroke-linecap="round" stroke-linejoin="round" /><rect x="1.6" y="1.6" width="2.8" height="2.8" rx="0" fill="none" stroke="#5fd070" stroke-width="1"/><rect x="11.6" y="1.6" width="2.8" height="2.8" rx="0" fill="none" stroke="#5fd070" stroke-width="1"/><rect x="6.6" y="11.6" width="2.8" height="2.8" rx="0" fill="none" stroke="#5fd070" stroke-width="1"/></svg>
<div style="left:1590px;top:654px;width:33px;height:33px;background:#303030;border-radius:4px 0 0 4px;"></div>
<svg style="left:1596.50px;top:660.50px;" width="20" height="20" viewBox="0 0 16 16"><circle cx="8" cy="8" r="6.5" fill="#e8585c"/><path d="M8 8.4 L2.9 8.4 A5.1 5.1 0 0 0 7.2 13.1 Z" fill="#303030"/><path d="M8.6 9 L9.4 13 A5.1 5.1 0 0 0 12.6 10.6 Z" fill="#303030"/></svg>
<div style="left:1590px;top:698px;width:33px;height:33px;background:#303030;border-radius:4px 0 0 4px;"></div>
<svg style="left:1596.50px;top:704.50px;" width="20" height="20" viewBox="0 0 16 16"><rect x="2" y="2" width="3" height="3" fill="#e8585c"/><rect x="2" y="8" width="3" height="3" fill="#e8585c"/><rect x="5" y="5" width="3" height="3" fill="#e8585c"/><rect x="5" y="11" width="3" height="3" fill="#e8585c"/><rect x="8" y="2" width="3" height="3" fill="#e8585c"/><rect x="8" y="8" width="3" height="3" fill="#e8585c"/><rect x="11" y="5" width="3" height="3" fill="#e8585c"/><rect x="11" y="11" width="3" height="3" fill="#e8585c"/><rect x="2" y="2" width="12" height="12" rx="0" fill="none" stroke="#e8585c" stroke-width="0.8"/><rect x="2" y="2" width="12" height="12" fill="#e8585c" opacity=".0"/></svg>
<svg style="left:1650.5px;top:227.0px;" width="9" height="9" viewBox="0 0 9 9"><path d="M1 0.5 V8.5 L8.5 4.5Z" fill="#b4b4b4"/></svg>
<div class="t" style="left:1667px;top:220.0px;line-height:24px;">Denoising</div>
<svg style="left:1650.5px;top:257.0px;" width="9" height="9" viewBox="0 0 9 9"><path d="M1 0.5 V8.5 L8.5 4.5Z" fill="#b4b4b4"/></svg>
<div class="t" style="left:1667px;top:250.0px;line-height:24px;">Advanced</div>
<svg style="left:1633.5px;top:287.0px;" width="9" height="9" viewBox="0 0 9 9"><path d="M1 0.5 V8.5 L8.5 4.5Z" fill="#b4b4b4"/></svg>
<div class="tp" style="left:1650px;top:279.5px;line-height:24px;">Light Paths</div>
<svg style="left:1896px;top:288.0px;" width="14" height="6" viewBox="0 0 14 6"><rect x="0" y="0" width="2" height="2" fill="#9a9a9a"/><rect x="0" y="4" width="2" height="2" fill="#9a9a9a"/><rect x="4" y="0" width="2" height="2" fill="#9a9a9a"/><rect x="4" y="4" width="2" height="2" fill="#9a9a9a"/><rect x="8" y="0" width="2" height="2" fill="#9a9a9a"/><rect x="8" y="4" width="2" height="2" fill="#9a9a9a"/><rect x="12" y="0" width="2" height="2" fill="#9a9a9a"/><rect x="12" y="4" width="2" height="2" fill="#9a9a9a"/></svg>
<svg style="left:1633.5px;top:317.0px;" width="9" height="9" viewBox="0 0 9 9"><path d="M1 0.5 V8.5 L8.5 4.5Z" fill="#b4b4b4"/></svg>
<div class="tp" style="left:1650px;top:309.5px;line-height:24px;">Volumes</div>
<svg style="left:1896px;top:318.0px;" width="14" height="6" viewBox="0 0 14 6"><rect x="0" y="0" width="2" height="2" fill="#9a9a9a"/><rect x="0" y="4" width="2" height="2" fill="#9a9a9a"/><rect x="4" y="0" width="2" height="2" fill="#9a9a9a"/><rect x="4" y="4" width="2" height="2" fill="#9a9a9a"/><rect x="8" y="0" width="2" height="2" fill="#9a9a9a"/><rect x="8" y="4" width="2" height="2" fill="#9a9a9a"/><rect x="12" y="0" width="2" height="2" fill="#9a9a9a"/><rect x="12" y="4" width="2" height="2" fill="#9a9a9a"/></svg>
<svg style="left:1633.5px;top:347.0px;" width="9" height="9" viewBox="0 0 9 9"><path d="M1 0.5 V8.5 L8.5 4.5Z" fill="#b4b4b4"/></svg>
<div class="tp" style="left:1650px;top:339.5px;line-height:24px;">Hair</div>
<svg style="left:1896px;top:348.0px;" width="14" height="6" viewBox="0 0 14 6"><rect x="0" y="0" width="2" height="2" fill="#9a9a9a"/><rect x="0" y="4" width="2" height="2" fill="#9a9a9a"/><rect x="4" y="0" width="2" height="2" fill="#9a9a9a"/><rect x="4" y="4" width="2" height="2" fill="#9a9a9a"/><rect x="8" y="0" width="2" height="2" fill="#9a9a9a"/><rect x="8" y="4" width="2" height="2" fill="#9a9a9a"/><rect x="12" y="0" width="2" height="2" fill="#9a9a9a"/><rect x="12" y="4" width="2" height="2" fill="#9a9a9a"/></svg>
<svg style="left:1633.5px;top:377.0px;" width="9" height="9" viewBox="0 0 9 9"><path d="M1 0.5 V8.5 L8.5 4.5Z" fill="#b4b4b4"/></svg>
<div style="left:1649px;top:374.0px;width:15px;height:15px;background:#666666;border-radius:3px;"></div>
<div class="tp" style="left:1669px;top:369.5px;line-height:24px;">Simplify</div>
<svg style="left:1896px;top:378.0px;" width="14" height="6" viewBox="0 0 14 6"><rect x="0" y="0" width="2" height="2" fill="#9a9a9a"/><rect x="0" y="4" width="2" height="2" fill="#9a9a9a"/><rect x="4" y="0" width="2" height="2" fill="#9a9a9a"/><rect x="4" y="4" width="2" height="2" fill="#9a9a9a"/><rect x="8" y="0" width="2" height="2" fill="#9a9a9a"/><rect x="8" y="4" width="2" height="2" fill="#9a9a9a"/><rect x="12" y="0" width="2" height="2" fill="#9a9a9a"/><rect x="12" y="4" width="2" height="2" fill="#9a9a9a"/></svg>
<svg style="left:1633.5px;top:407.0px;" width="9" height="9" viewBox="0 0 9 9"><path d="M1 0.5 V8.5 L8.5 4.5Z" fill="#b4b4b4"/></svg>
<div style="left:1649px;top:404.0px;width:15px;height:15px;background:#666666;border-radius:3px;"></div>
<div class="tp" style="left:1669px;top:399.5px;line-height:24px;">Motion Blur</div>
<svg style="left:1896px;top:408.0px;" width="14" height="6" viewBox="0 0 14 6"><rect x="0" y="0" width="2" height="2" fill="#9a9a9a"/><rect x="0" y="4" width="2" height="2" fill="#9a9a9a"/><rect x="4" y="0" width="2" height="2" fill="#9a9a9a"/><rect x="4" y="4" width="2" height="2" fill="#9a9a9a"/><rect x="8" y="0" width="2" height="2" fill="#9a9a9a"/><rect x="8" y="4" width="2" height="2" fill="#9a9a9a"/><rect x="12" y="0" width="2" height="2" fill="#9a9a9a"/><rect x="12" y="4" width="2" height="2" fill="#9a9a9a"/></svg>
<svg style="left:1633.5px;top:437.0px;" width="9" height="9" viewBox="0 0 9 9"><path d="M1 0.5 V8.5 L8.5 4.5Z" fill="#b4b4b4"/></svg>
<div class="tp" style="left:1650px;top:429.5px;line-height:24px;">Film</div>
<svg style="left:1896px;top:438.0px;" width="14" height="6" viewBox="0 0 14 6"><rect x="0" y="0" width="2" height="2" fill="#9a9a9a"/><rect x="0" y="4" width="2" height="2" fill="#9a9a9a"/><rect x="4" y="0" width="2" height="2" fill="#9a9a9a"/><rect x="4" y="4" width="2" height="2" fill="#9a9a9a"/><rect x="8" y="0" width="2" height="2" fill="#9a9a9a"/><rect x="8" y="4" width="2" height="2" fill="#9a9a9a"/><rect x="12" y="0" width="2" height="2" fill="#9a9a9a"/><rect x="12" y="4" width="2" height="2" fill="#9a9a9a"/></svg>
<svg style="left:1633.5px;top:467.0px;" width="9" height="9" viewBox="0 0 9 9"><path d="M1 0.5 V8.5 L8.5 4.5Z" fill="#b4b4b4"/></svg>
<div class="tp" style="left:1650px;top:459.5px;line-height:24px;">Performance</div>
<svg style="left:1896px;top:468.0px;" width="14" height="6" viewBox="0 0 14 6"><rect x="0" y="0" width="2" height="2" fill="#9a9a9a"/><rect x="0" y="4" width="2" height="2" fill="#9a9a9a"/><rect x="4" y="0" width="2" height="2" fill="#9a9a9a"/><rect x="4" y="4" width="2" height="2" fill="#9a9a9a"/><rect x="8" y="0" width="2" height="2" fill="#9a9a9a"/><rect x="8" y="4" width="2" height="2" fill="#9a9a9a"/><rect x="12" y="0" width="2" height="2" fill="#9a9a9a"/><rect x="12" y="4" width="2" height="2" fill="#9a9a9a"/></svg>
<svg style="left:1633.5px;top:497.0px;" width="9" height="9" viewBox="0 0 9 9"><path d="M0.5 1 H8.5 L4.5 8.5Z" fill="#b4b4b4"/></svg>
<div class="tp" style="left:1650px;top:489.5px;line-height:24px;">Bake</div>
<svg style="left:1896px;top:498.0px;" width="14" height="6" viewBox="0 0 14 6"><rect x="0" y="0" width="2" height="2" fill="#9a9a9a"/><rect x="0" y="4" width="2" height="2" fill="#9a9a9a"/><rect x="4" y="0" width="2" height="2" fill="#9a9a9a"/><rect x="4" y="4" width="2" height="2" fill="#9a9a9a"/><rect x="8" y="0" width="2" height="2" fill="#9a9a9a"/><rect x="8" y="4" width="2" height="2" fill="#9a9a9a"/><rect x="12" y="0" width="2" height="2" fill="#9a9a9a"/><rect x="12" y="4" width="2" height="2" fill="#9a9a9a"/></svg>
<svg style="left:1633.5px;top:901.0px;" width="9" height="9" viewBox="0 0 9 9"><path d="M1 0.5 V8.5 L8.5 4.5Z" fill="#b4b4b4"/></svg>
<div class="tp" style="left:1650px;top:893.5px;line-height:24px;">Grease Pencil</div>
<svg style="left:1896px;top:902.0px;" width="14" height="6" viewBox="0 0 14 6"><rect x="0" y="0" width="2" height="2" fill="#9a9a9a"/><rect x="0" y="4" width="2" height="2" fill="#9a9a9a"/><rect x="4" y="0" width="2" height="2" fill="#9a9a9a"/><rect x="4" y="4" width="2" height="2" fill="#9a9a9a"/><rect x="8" y="0" width="2" height="2" fill="#9a9a9a"/><rect x="8" y="4" width="2" height="2" fill="#9a9a9a"/><rect x="12" y="0" width="2" height="2" fill="#9a9a9a"/><rect x="12" y="4" width="2" height="2" fill="#9a9a9a"/></svg>
<svg style="left:1633.5px;top:931.0px;" width="9" height="9" viewBox="0 0 9 9"><path d="M1 0.5 V8.5 L8.5 4.5Z" fill="#b4b4b4"/></svg>
<div style="left:1649px;top:928.0px;width:15px;height:15px;background:#666666;border-radius:3px;"></div>
<div class="tp" style="left:1669px;top:923.5px;line-height:24px;">Freestyle</div>
<svg style="left:1896px;top:932.0px;" width="14" height="6" viewBox="0 0 14 6"><rect x="0" y="0" width="2" height="2" fill="#9a9a9a"/><rect x="0" y="4" width="2" height="2" fill="#9a9a9a"/><rect x="4" y="0" width="2" height="2" fill="#9a9a9a"/><rect x="4" y="4" width="2" height="2" fill="#9a9a9a"/><rect x="8" y="0" width="2" height="2" fill="#9a9a9a"/><rect x="8" y="4" width="2" height="2" fill="#9a9a9a"/><rect x="12" y="0" width="2" height="2" fill="#9a9a9a"/><rect x="12" y="4" width="2" height="2" fill="#9a9a9a"/></svg>
<svg style="left:1633.5px;top:961.0px;" width="9" height="9" viewBox="0 0 9 9"><path d="M1 0.5 V8.5 L8.5 4.5Z" fill="#b4b4b4"/></svg>
<div class="tp" style="left:1650px;top:953.5px;line-height:24px;">Color Management</div>
<svg style="left:1896px;top:962.0px;" width="14" height="6" viewBox="0 0 14 6"><rect x="0" y="0" width="2" height="2" fill="#9a9a9a"/><rect x="0" y="4" width="2" height="2" fill="#9a9a9a"/><rect x="4" y="0" width="2" height="2" fill="#9a9a9a"/><rect x="4" y="4" width="2" height="2" fill="#9a9a9a"/><rect x="8" y="0" width="2" height="2" fill="#9a9a9a"/><rect x="8" y="4" width="2" height="2" fill="#9a9a9a"/><rect x="12" y="0" width="2" height="2" fill="#9a9a9a"/><rect x="12" y="4" width="2" height="2" fill="#9a9a9a"/></svg>
<svg style="left:1865.50px;top:282.00px;" width="19" height="19" viewBox="0 0 16 16"><circle cx="2.6" cy="3" r="1.3" fill="#e6e6e6"/><circle cx="2.6" cy="8" r="1.3" fill="#e6e6e6"/><circle cx="2.6" cy="13" r="1.3" fill="#e6e6e6"/><path d="M6.2 3 H14.6 M6.2 8 H14.6 M6.2 13 H14.6" fill="none" stroke="#e6e6e6" stroke-width="1.1" stroke-linecap="round" stroke-linejoin="round" /></svg>
<div style="left:1634px;top:527px;width:275px;height:23px;background:#585858;border-radius:4px;"></div>
<svg style="left:1638.00px;top:528.50px;" width="20" height="20" viewBox="0 0 16 16"><path d="M4.6 1.6 H8.6 V3.4 H4.6Z" fill="#f0f0f0"/><path d="M2 4.6 H10.2 V14.2 H2Z" fill="none" stroke="#f0f0f0" stroke-width="1.2" stroke-linecap="round" stroke-linejoin="round" /><path d="M5.4 6 H14.2 V9 C14.2 11 13 12 11.4 12 H5.4Z" fill="#585858" stroke="#f0f0f0" stroke-width="1.1"/><path d="M7 7.8 h1 M9 7.8 h1 M11 7.8 h1" stroke="#f0f0f0" stroke-width="1.1"/></svg>
<div class="t" style="left:1656px;top:527px;width:253px;text-align:center;line-height:23px;">Bake</div>
<div style="left:1744px;top:562px;width:15px;height:15px;background:#666666;border-radius:3px;"></div>
<div class="t" style="left:1763px;top:558.0px;line-height:24px;">Bake from Multires</div>
<div class="t" style="right:186px;top:589.0px;line-height:24px;">Bake Type</div>
<div style="left:1743.5px;top:589px;width:165.5px;height:23px;background:#2a2a2a;border:1px solid #3d3d3d;border-radius:4px;"></div>
<div class="t" style="left:1752px;top:589px;line-height:23px;">Diffuse</div>
<svg style="left:1892.00px;top:593.00px;" width="16" height="16" viewBox="0 0 16 16"><path d="M4.3 6.2 L8 9.9 L11.7 6.2" fill="none" stroke="#e6e6e6" stroke-width="1.45" stroke-linecap="round" stroke-linejoin="round" /></svg>
<svg style="left:1650.5px;top:633.5px;" width="9" height="9" viewBox="0 0 9 9"><path d="M0.5 1 H8.5 L4.5 8.5Z" fill="#b4b4b4"/></svg>
<div class="t" style="left:1667px;top:626.5px;line-height:24px;">Influence</div>
<div class="t" style="right:186px;top:669.5px;line-height:24px;">Contributions</div>
<div style="left:1744px;top:674px;width:15px;height:15px;background:#666666;border-radius:3px;"></div>
<div class="t" style="left:1763px;top:669.5px;line-height:24px;">Direct</div>
<div style="left:1744px;top:699px;width:15px;height:15px;background:#666666;border-radius:3px;"></div>
<div class="t" style="left:1763px;top:694.5px;line-height:24px;">Indirect</div>
<div style="left:1744px;top:724px;width:15px;height:15px;background:#5680c2;border-radius:3px;"></div>
<svg style="left:1744px;top:724px;" width="15" height="15" viewBox="0 0 15 15"><path d="M3.4 7.6 L6.4 10.8 L11.8 4.2" stroke="#fff" stroke-width="2" fill="none" stroke-linecap="round" stroke-linejoin="round"/></svg>
<div class="t" style="left:1763px;top:720.0px;line-height:24px;">Color</div>
<div style="left:1726px;top:716.5px;width:96px;height:34px;border:3px solid #f00008;border-radius:2px;"></div>
<svg style="left:1650.5px;top:764.5px;" width="9" height="9" viewBox="0 0 9 9"><path d="M1 0.5 V8.5 L8.5 4.5Z" fill="#b4b4b4"/></svg>
<div style="left:1666px;top:761.5px;width:15px;height:15px;background:#666666;border-radius:3px;"></div>
<div class="t" style="left:1686px;top:757.5px;line-height:24px;">Selected to Active</div>
<svg style="left:1650.5px;top:794.5px;" width="9" height="9" viewBox="0 0 9 9"><path d="M0.5 1 H8.5 L4.5 8.5Z" fill="#b4b4b4"/></svg>
<div class="t" style="left:1667px;top:787.5px;line-height:24px;">Output</div>
<div class="t" style="right:186px;top:825.0px;line-height:24px;">Margin</div>
<div style="left:1743.5px;top:825px;width:165.5px;height:23.5px;background:#545454;border-radius:4px;"></div>
<div class="t" style="left:1743.5px;top:825.5px;width:165.5px;text-align:center;line-height:23.5px;">16 px</div>
<div style="left:1744px;top:860px;width:15px;height:15px;background:#5680c2;border-radius:3px;"></div>
<svg style="left:1744px;top:860px;" width="15" height="15" viewBox="0 0 15 15"><path d="M3.4 7.6 L6.4 10.8 L11.8 4.2" stroke="#fff" stroke-width="2" fill="none" stroke-linecap="round" stroke-linejoin="round"/></svg>
<div class="t" style="left:1763px;top:856.0px;line-height:24px;">Clear Image</div>
<div style="left:1771px;top:756.5px;width:130px;height:42px;background:#1b1b1d;border-radius:7px;box-shadow:0 2px 6px rgba(0,0,0,.45);"></div>
<div class="t" style="left:1787px;top:767.0px;line-height:24px;color:#f2f2f2;">Color the pass.</div>
<!-- s_image.py -->
<div style="left:0px;top:485.5px;width:647px;height:493.5px;background:#484848;border-radius:0 6px 6px 0;overflow:hidden;"><div style="left:0;top:0;width:647px;height:63px;background:#3b3b3b;"></div><div style="left:622px;top:63px;width:25px;height:430px;background:#2c2c2c;"></div><div style="left:373px;top:63px;width:249px;height:29px;background:#424242;"></div></div>
<div style="left:147px;top:586px;width:354px;height:354.5px;background:#000;"></div>
<div style="left:373px;top:549px;width:249px;height:29px;background:rgba(66,66,66,.0);"></div>
<svg style="left:383.5px;top:559.5px;" width="9" height="9" viewBox="0 0 9 9"><path d="M0.5 1 H8.5 L4.5 8.5Z" fill="#c0c0c0"/></svg>
<div class="tp" style="left:400px;top:552.5px;line-height:24px;">Active Tool</div>
<svg style="left:598.5px;top:560.5px;" width="14" height="6" viewBox="0 0 14 6"><rect x="0" y="0" width="2" height="2" fill="#a0a0a0"/><rect x="0" y="4" width="2" height="2" fill="#a0a0a0"/><rect x="4" y="0" width="2" height="2" fill="#a0a0a0"/><rect x="4" y="4" width="2" height="2" fill="#a0a0a0"/><rect x="8" y="0" width="2" height="2" fill="#a0a0a0"/><rect x="8" y="4" width="2" height="2" fill="#a0a0a0"/><rect x="12" y="0" width="2" height="2" fill="#a0a0a0"/><rect x="12" y="4" width="2" height="2" fill="#a0a0a0"/></svg>
<div style="left:11px;top:491px;width:38px;height:23px;background:#2b2b2b;border:1px solid #404040;border-radius:5px;"></div>
<svg style="left:15.00px;top:492.50px;" width="20" height="20" viewBox="0 0 16 16"><path d="M1.8 2.4 V14 H13.4" fill="none" stroke="#e6e6e6" stroke-width="1.1" stroke-linecap="round" stroke-linejoin="round" /><path d="M4.4 1.8 H14 V8.4 H11.4 V12 H9 V6.8 H7.6 V8.2 H4.4Z" fill="#e6e6e6"/></svg>
<svg style="left:32.50px;top:495.00px;" width="16" height="16" viewBox="0 0 16 16"><path d="M4.3 6.2 L8 9.9 L11.7 6.2" fill="none" stroke="#e6e6e6" stroke-width="1.45" stroke-linecap="round" stroke-linejoin="round" /></svg>
<div style="left:11px;top:523px;width:80px;height:23px;background:#2b2b2b;border:1px solid #404040;border-radius:5px;"></div>
<svg style="left:15.00px;top:524.50px;" width="20" height="20" viewBox="0 0 16 16"><rect x="1.8" y="1.8" width="12.4" height="12.4" rx="0.6" fill="none" stroke="#e6e6e6" stroke-width="1.2"/><path d="M2.6 13.4 L7 6.6 L11.4 13.4Z" fill="#e6e6e6"/><circle cx="10.8" cy="5" r="1.3" fill="#e6e6e6"/></svg>
<div class="t" style="left:42px;top:523px;line-height:23px;color:#e6e6e6;">View</div>
<svg style="left:74.50px;top:527.00px;" width="16" height="16" viewBox="0 0 16 16"><path d="M4.3 6.2 L8 9.9 L11.7 6.2" fill="none" stroke="#e6e6e6" stroke-width="1.45" stroke-linecap="round" stroke-linejoin="round" /></svg>
<svg style="left:101.00px;top:525.00px;" width="19" height="19" viewBox="0 0 16 16"><path d="M1.6 3.4 H14.4 M1.6 8 H14.4 M1.6 12.6 H14.4" stroke="#f0f0f0" stroke-width="2" fill="none"/></svg>
<div style="left:143px;top:523px;width:38px;height:23px;background:#2b2b2b;border:1px solid #404040;border-right:none;border-radius:4px 0 0 4px;"></div>
<svg style="left:147.50px;top:525.00px;" width="19" height="19" viewBox="0 0 16 16"><rect x="1.8" y="1.8" width="12.4" height="12.4" rx="0.6" fill="none" stroke="#e6e6e6" stroke-width="1.2"/><path d="M2.6 13.4 L7 6.6 L11.4 13.4Z" fill="#e6e6e6"/><circle cx="10.8" cy="5" r="1.3" fill="#e6e6e6"/></svg>
<svg style="left:165.50px;top:527.00px;" width="16" height="16" viewBox="0 0 16 16"><path d="M4.3 6.2 L8 9.9 L11.7 6.2" fill="none" stroke="#e6e6e6" stroke-width="1.45" stroke-linecap="round" stroke-linejoin="round" /></svg>
<div style="left:181px;top:523px;width:150px;height:23px;background:#1d1d1d;border-top:1px solid #333;border-bottom:1px solid #333;"></div>
<div class="t" style="left:191px;top:523px;line-height:23px;">Body Tahu ID Map</div>
<div style="left:331px;top:523px;width:130px;height:23px;background:#505050;border-radius:0 4px 4px 0;"></div>
<div style="left:360.5px;top:523px;width:1px;height:23px;background:#424242;"></div>
<div style="left:385.5px;top:523px;width:1px;height:23px;background:#424242;"></div>
<div style="left:410.5px;top:523px;width:1px;height:23px;background:#424242;"></div>
<div style="left:435.5px;top:523px;width:1px;height:23px;background:#424242;"></div>
<div class="t" style="left:331px;top:523px;width:30px;text-align:center;line-height:23px;">3</div>
<svg style="left:364.00px;top:525.00px;" width="19" height="19" viewBox="0 0 16 16"><path d="M2.6 3 C5 3 6.8 2.6 8 1.8 C9.2 2.6 11 3 13.4 3 C13.4 9 11.6 12.4 8 14.4 C4.4 12.4 2.6 9 2.6 3Z" fill="none" stroke="#9a9a9a" stroke-width="1.1" stroke-linecap="round" stroke-linejoin="round" /></svg>
<svg style="left:389.00px;top:525.00px;" width="19" height="19" viewBox="0 0 16 16"><path d="M5.4 4.6 V1.8 H10.8 L14.2 5.2 V11.4 H5.4 V4.6 M10.6 1.8 V5.4 H14.2 M5.2 4.8 H1.8 V14.2 H10.6 V11.6" fill="none" stroke="#dcdcdc" stroke-width="1.15" stroke-linecap="round" stroke-linejoin="round" /></svg>
<svg style="left:414.00px;top:525.00px;" width="19" height="19" viewBox="0 0 16 16"><path d="M1.5 3 h5 l1 1.5 h7 v2 h-13z" fill="#f0f0f0" /><path d="M1.5 7.2 h13 v6.3 h-13z" fill="#f0f0f0" /></svg>
<svg style="left:440.50px;top:526.50px;" width="16" height="16" viewBox="0 0 16 16"><path d="M3.6 3.6 L12.4 12.4 M12.4 3.6 L3.6 12.4" fill="none" stroke="#e6e6e6" stroke-width="1.2" stroke-linecap="round" stroke-linejoin="round" /></svg>
<svg style="left:470.50px;top:525.00px;" width="19" height="19" viewBox="0 0 16 16"><path d="M9.4 1.8 L14.2 6.6 L12.6 7.2 L10.4 9.4 L10.2 12 L4 5.8 L6.6 5.6 L8.8 3.4Z M7 9 L1.8 14.2" fill="none" stroke="#a0a0a0" stroke-width="1.1" stroke-linecap="round" stroke-linejoin="round" /></svg>
<div style="left:536px;top:523px;width:23.5px;height:23px;background:#5680c2;border-radius:4px 0 0 4px;"></div>
<svg style="left:538.00px;top:525.00px;" width="19" height="19" viewBox="0 0 16 16"><circle cx="9.8" cy="6.2" r="4.3" fill="#ffffff"/><path d="M6.6 5.2 A4.6 4.6 0 1 0 10.8 11.6" fill="none" stroke="#ffffff" stroke-width="1.2"/><path d="M7 9.2 L9 11.2" stroke="#5680c2" stroke-width="1"/></svg>
<div style="left:559.5px;top:523px;width:24.5px;height:23px;background:#282828;border-radius:0 4px 4px 0;"></div>
<svg style="left:563.50px;top:527.00px;" width="16" height="16" viewBox="0 0 16 16"><path d="M4.3 6.2 L8 9.9 L11.7 6.2" fill="none" stroke="#e6e6e6" stroke-width="1.45" stroke-linecap="round" stroke-linejoin="round" /></svg>
<div style="left:597.5px;top:523px;width:38.5px;height:23px;background:#2b2b2b;border:1px solid #404040;border-radius:5px;"></div>
<svg style="left:601.50px;top:524.50px;" width="20" height="20" viewBox="0 0 16 16"><rect x="1.8" y="1.8" width="12.4" height="12.4" rx="0.4" fill="none" stroke="#e6e6e6" stroke-width="1.2"/><path d="M2.4 2.4 L13.6 13.6 H2.4Z" fill="#e6e6e6" opacity=".55"/><circle cx="10.8" cy="5" r="1.4" fill="#e6e6e6"/><path d="M2.4 13.6 L6 8 L9.6 13.6" fill="#e6e6e6"/></svg>
<svg style="left:619.50px;top:527.00px;" width="16" height="16" viewBox="0 0 16 16"><path d="M4.3 6.2 L8 9.9 L11.7 6.2" fill="none" stroke="#e6e6e6" stroke-width="1.45" stroke-linecap="round" stroke-linejoin="round" /></svg>
<svg style="left:325px;top:556px;" width="40" height="80" viewBox="0 0 40 80"><circle cx="20" cy="20" r="17.2" fill="#2e2e2e" opacity=".95"/><circle cx="20" cy="58" r="17.2" fill="#2e2e2e" opacity=".95"/></svg>
<svg style="left:333.00px;top:564.00px;" width="24" height="24" viewBox="0 0 16 16"><circle cx="10.2" cy="5.8" r="5.6" fill="#f2f2f2"/><path d="M6.4 9.6 L1.8 14.2" stroke="#f2f2f2" stroke-width="2.3" stroke-linecap="round"/><path d="M10.2 3 V8.6 M7.4 5.8 H13" stroke="#2a2a2a" stroke-width="1.1"/></svg>
<svg style="left:333.50px;top:602.00px;" width="23" height="23" viewBox="0 0 16 16"><ellipse cx="8.6" cy="11.2" rx="4.3" ry="3.7" fill="#f2f2f2"/><path d="M6.3 9.4 L5 3.4 M8.1 8.8 L7.9 1.9 M10 9 L10.9 2.7 M11.8 10.2 L13.6 5.2 M5.4 12 L2.1 8.8" stroke="#f2f2f2" stroke-width="1.9" stroke-linecap="round" fill="none"/></svg>
<div style="left:622px;top:556px;width:21px;height:44px;background:#5680c2;border-radius:0 4px 4px 0;"></div>
<div class="t" style="left:610.5px;top:567.5px;width:44px;height:21px;line-height:21px;text-align:center;transform:rotate(-90deg);color:#ffffff;">Tool</div>
<div style="left:622px;top:607px;width:21px;height:58px;background:#3a3a3a;border-radius:0 4px 4px 0;"></div>
<div class="t" style="left:603.5px;top:625.5px;width:58px;height:21px;line-height:21px;text-align:center;transform:rotate(-90deg);color:#d0d0d0;">Image</div>
<div style="left:622px;top:672.5px;width:21px;height:49.5px;background:#3a3a3a;border-radius:0 4px 4px 0;"></div>
<div class="t" style="left:607.75px;top:686.75px;width:49.5px;height:21px;line-height:21px;text-align:center;transform:rotate(-90deg);color:#d0d0d0;">View</div>
<div style="left:622px;top:729px;width:21px;height:64px;background:#3a3a3a;border-radius:0 4px 4px 0;"></div>
<div class="t" style="left:600.5px;top:750.5px;width:64px;height:21px;line-height:21px;text-align:center;transform:rotate(-90deg);color:#d0d0d0;">Scopes</div>
<div style="left:0px;top:567px;width:6px;height:17px;background:#3a3a3a;border-radius:0 3px 3px 0;"></div>
<svg style="left:0px;top:570.5px;" width="6" height="10" viewBox="0 0 6 10"><path d="M1 1 L5 5 L1 9" stroke="#a0a0a0" stroke-width="1.2" fill="none"/></svg>
<!-- s_node.py -->
<div style="left:650px;top:486px;width:935px;height:493px;background-color:#242424;background-image:linear-gradient(90deg,#111111 0,#111111 1px,transparent 1px),linear-gradient(180deg,#111111 0,#111111 1px,transparent 1px),linear-gradient(90deg,#1a1a1a 0,#1a1a1a 1px,transparent 1px),linear-gradient(180deg,#1a1a1a 0,#1a1a1a 1px,transparent 1px);background-size:73.75px 73.75px,73.75px 73.75px,14.75px 14.75px,14.75px 14.75px;background-position:12.25px 0,0 4.15px,12.25px 0,0 4.15px;border-radius:6px;overflow:hidden;"><div style="left:0;top:0;width:935px;height:31.5px;background:#383838;"></div></div>
<div style="left:659.5px;top:490.5px;width:38.5px;height:23px;background:#2b2b2b;border:1px solid #404040;border-radius:5px;"></div>
<svg style="left:663.50px;top:492.00px;" width="20" height="20" viewBox="0 0 16 16"><circle cx="8" cy="8" r="6.2" fill="none" stroke="#e6e6e6" stroke-width="1.2"/><path d="M4.4 7 A3.8 3.8 0 0 1 7.4 4.2" fill="none" stroke="#e6e6e6" stroke-width="1.1" stroke-linecap="round" stroke-linejoin="round" /></svg>
<svg style="left:681.50px;top:494.50px;" width="16" height="16" viewBox="0 0 16 16"><path d="M4.3 6.2 L8 9.9 L11.7 6.2" fill="none" stroke="#e6e6e6" stroke-width="1.45" stroke-linecap="round" stroke-linejoin="round" /></svg>
<div style="left:706px;top:490.5px;width:109px;height:23px;background:#2b2b2b;border:1px solid #404040;border-radius:5px;"></div>
<svg style="left:710.00px;top:492.00px;" width="20" height="20" viewBox="0 0 16 16"><rect x="4.2" y="4.2" width="7.6" height="7.6" rx="0" fill="#e6e6e6"/><path d="M1.6 4.6 V1.6 H4.6 M11.4 1.6 H14.4 V4.6 M14.4 11.4 V14.4 H11.4 M4.6 14.4 H1.6 V11.4" fill="none" stroke="#e6e6e6" stroke-width="1.1" stroke-linecap="round" stroke-linejoin="round" /></svg>
<div class="t" style="left:737px;top:490.5px;line-height:23px;color:#e6e6e6;">Object</div>
<svg style="left:798.50px;top:494.50px;" width="16" height="16" viewBox="0 0 16 16"><path d="M4.3 6.2 L8 9.9 L11.7 6.2" fill="none" stroke="#e6e6e6" stroke-width="1.45" stroke-linecap="round" stroke-linejoin="round" /></svg>
<div class="t" style="left:831px;top:490.5px;line-height:23px;">View</div>
<div class="t" style="left:880.5px;top:490.5px;line-height:23px;">Select</div>
<div class="t" style="left:939px;top:490.5px;line-height:23px;">Add</div>
<div class="t" style="left:982.5px;top:490.5px;line-height:23px;">Node</div>
<div style="left:1034px;top:494.5px;width:15px;height:15px;background:#5680c2;border-radius:3px;"></div>
<svg style="left:1034px;top:494.5px;" width="15" height="15" viewBox="0 0 15 15"><path d="M3.4 7.6 L6.4 10.8 L11.8 4.2" stroke="#fff" stroke-width="2" fill="none" stroke-linecap="round" stroke-linejoin="round"/></svg>
<div class="t" style="left:1053px;top:490.5px;line-height:23px;">Use Nodes</div>
<div style="left:1165px;top:490.5px;width:98px;height:23px;background:#2b2b2b;border:1px solid #404040;border-radius:5px;"></div>
<div class="t" style="left:1174px;top:490.5px;line-height:23px;color:#e6e6e6;">Slot 1</div>
<svg style="left:1246.50px;top:494.50px;" width="16" height="16" viewBox="0 0 16 16"><path d="M4.3 6.2 L8 9.9 L11.7 6.2" fill="none" stroke="#e6e6e6" stroke-width="1.45" stroke-linecap="round" stroke-linejoin="round" /></svg>
<div style="left:1271px;top:490.5px;width:38px;height:23px;background:#2b2b2b;border:1px solid #404040;border-right:none;border-radius:4px 0 0 4px;"></div>
<svg style="left:1275.50px;top:492.50px;" width="19" height="19" viewBox="0 0 16 16"><circle cx="8" cy="8" r="6.2" fill="none" stroke="#e6e6e6" stroke-width="1.2"/><path d="M8 1.8 A6.2 6.2 0 0 0 1.8 8 H8Z M8 8 H14.2 A6.2 6.2 0 0 1 8 14.2Z" fill="#e6e6e6"/></svg>
<svg style="left:1293.50px;top:494.50px;" width="16" height="16" viewBox="0 0 16 16"><path d="M4.3 6.2 L8 9.9 L11.7 6.2" fill="none" stroke="#e6e6e6" stroke-width="1.45" stroke-linecap="round" stroke-linejoin="round" /></svg>
<div style="left:1309px;top:490.5px;width:150px;height:23px;background:#1d1d1d;border-top:1px solid #333;border-bottom:1px solid #333;"></div>
<div class="t" style="left:1319px;top:490.5px;line-height:23px;">Body Tahu Red</div>
<div style="left:1459px;top:490.5px;width:74.5px;height:23px;background:#505050;border-radius:0 4px 4px 0;"></div>
<div style="left:1483.5px;top:490.5px;width:1px;height:23px;background:#424242;"></div>
<div style="left:1508.5px;top:490.5px;width:1px;height:23px;background:#424242;"></div>
<svg style="left:1462.00px;top:492.50px;" width="19" height="19" viewBox="0 0 16 16"><path d="M2.6 3 C5 3 6.8 2.6 8 1.8 C9.2 2.6 11 3 13.4 3 C13.4 9 11.6 12.4 8 14.4 C4.4 12.4 2.6 9 2.6 3Z" fill="none" stroke="#9a9a9a" stroke-width="1.1" stroke-linecap="round" stroke-linejoin="round" /></svg>
<svg style="left:1487.00px;top:492.50px;" width="19" height="19" viewBox="0 0 16 16"><path d="M5.4 4.6 V1.8 H10.8 L14.2 5.2 V11.4 H5.4 V4.6 M10.6 1.8 V5.4 H14.2 M5.2 4.8 H1.8 V14.2 H10.6 V11.6" fill="none" stroke="#dcdcdc" stroke-width="1.15" stroke-linecap="round" stroke-linejoin="round" /></svg>
<svg style="left:1513.50px;top:494.00px;" width="16" height="16" viewBox="0 0 16 16"><path d="M3.6 3.6 L12.4 12.4 M12.4 3.6 L3.6 12.4" fill="none" stroke="#e6e6e6" stroke-width="1.2" stroke-linecap="round" stroke-linejoin="round" /></svg>
<svg style="left:1544.50px;top:492.50px;" width="19" height="19" viewBox="0 0 16 16"><path d="M9.4 1.8 L14.2 6.6 L12.6 7.2 L10.4 9.4 L10.2 12 L4 5.8 L6.6 5.6 L8.8 3.4Z M7 9 L1.8 14.2" fill="none" stroke="#a0a0a0" stroke-width="1.1" stroke-linecap="round" stroke-linejoin="round" /></svg>
<div style="left:650px;top:534px;width:7px;height:17px;background:#2e2e2e;border-radius:0 3px 3px 0;"></div>
<svg style="left:650px;top:537.5px;" width="7" height="10" viewBox="0 0 7 10"><path d="M1.5 1 L5.5 5 L1.5 9" stroke="#aaa" stroke-width="1.2" fill="none"/></svg>
<div style="left:1577px;top:535px;width:8px;height:17px;background:#2e2e2e;border-radius:3px 0 0 3px;"></div>
<svg style="left:1578px;top:538.5px;" width="7" height="10" viewBox="0 0 7 10"><path d="M5.5 1 L1.5 5 L5.5 9" stroke="#bbb" stroke-width="1.2" fill="none"/></svg>
<div class="t" style="left:686px;top:926.5px;line-height:24px;color:#e0e0e0;">Body Tahu Red</div>
<div style="left:840.5px;top:660px;width:176.29999999999995px;height:183.5px;background:rgba(62,62,62,.96);border-radius:3px;box-shadow:0 0 0 1px #f0f0f0;overflow:hidden;"><div style="left:0;top:0;width:176.29999999999995px;height:14.5px;background:#b5632f;"></div></div>
<svg style="left:847.0px;top:665px;" width="6" height="6" viewBox="0 0 6 6"><path d="M0.3 0.6 H5.7 L3 5.6Z" fill="#e0e0e0"/></svg>
<div class="tn" style="left:857.5px;top:660.0px;line-height:14.5px;">Body Tahu ID Map</div>
<div class="tn" style="right:915.5px;top:679px;line-height:14px;">Color</div>
<div class="tn" style="right:915.5px;top:695px;line-height:14px;">Alpha</div>
<svg style="left:1013px;top:682.3px;" width="8" height="8" viewBox="0 0 8 8"><circle cx="4" cy="4" r="3" fill="#c7c729" stroke="#1c1c1c" stroke-width=".7"/></svg>
<svg style="left:1013px;top:698.3px;" width="8" height="8" viewBox="0 0 8 8"><circle cx="4" cy="4" r="3" fill="#a1a1a1" stroke="#1c1c1c" stroke-width=".7"/></svg>
<div style="left:850px;top:718px;width:21px;height:12px;background:#2b2b2b;border-radius:3px 0 0 3px;"></div>
<svg style="left:851.5px;top:719px;" width="10" height="10" viewBox="0 0 10 10"><rect x="0.6" y="0.6" width="8.8" height="8.8" fill="none" stroke="#e6e6e6" stroke-width=".9"/><path d="M1 9 L4 4.4 L7 9Z" fill="#e6e6e6"/><circle cx="7" cy="3" r=".9" fill="#e6e6e6"/></svg>
<svg style="left:863px;top:722px;" width="6" height="5" viewBox="0 0 6 5"><path d="M0.8 1 L3 3.4 L5.2 1" stroke="#e0e0e0" stroke-width="1" fill="none"/></svg>
<div style="left:871px;top:718px;width:61px;height:12px;background:#1d1d1d;"></div>
<div class="tn" style="left:875px;top:718.5px;line-height:12px;">Body Tahu I..</div>
<div style="left:932px;top:718px;width:77.3px;height:12px;background:#545454;border-radius:0 3px 3px 0;"></div>
<div class="tn" style="left:932px;top:718.5px;width:18.3px;text-align:center;line-height:12px;">3</div>
<div style="left:949.9px;top:718px;width:0.8px;height:12px;background:#3c3c3c;"></div>
<div style="left:964.9px;top:718px;width:0.8px;height:12px;background:#3c3c3c;"></div>
<div style="left:979.4px;top:718px;width:0.8px;height:12px;background:#3c3c3c;"></div>
<div style="left:993.9px;top:718px;width:0.8px;height:12px;background:#3c3c3c;"></div>
<svg style="left:952.8px;top:719px;" width="10" height="10" viewBox="0 0 10 10"><path d="M1.6 1.8 C3 1.8 4.2 1.6 5 1 C5.8 1.6 7 1.8 8.4 1.8 C8.4 5.6 7.2 7.8 5 9 C2.8 7.8 1.6 5.6 1.6 1.8Z" fill="none" stroke="#9a9a9a" stroke-width=".8"/></svg>
<svg style="left:967.3px;top:719px;" width="11" height="10" viewBox="0 0 11 10"><path d="M3.4 3 V1 H7 L9.4 3.4 V7.4 H3.4 V3 M7 1 V3.4 H9.4 M3.2 3 H1 V9.2 H7 V7.6" fill="none" stroke="#dcdcdc" stroke-width=".8"/></svg>
<svg style="left:981.8px;top:719.5px;" width="11" height="9" viewBox="0 0 11 9"><path d="M0.5 0.8 H4 L4.8 2 H10 V3.2 H0.5Z M0.5 3.8 H10 V8.6 H0.5Z" fill="#f0f0f0"/></svg>
<svg style="left:997.8px;top:720px;" width="8" height="8" viewBox="0 0 8 8"><path d="M1 1 L7 7 M7 1 L1 7" stroke="#e6e6e6" stroke-width=".9" fill="none"/></svg>
<div style="left:850px;top:736.0px;width:159px;height:11.6px;background:#282828;border-radius:3.5px;"></div>
<div class="tn" style="left:854px;top:736.5px;line-height:11.6px;">Linear</div>
<svg style="left:1000.5px;top:739.3px;" width="6" height="5" viewBox="0 0 6 5"><path d="M0.8 1 L3 3.4 L5.2 1" stroke="#e0e0e0" stroke-width="1" fill="none"/></svg>
<div style="left:850px;top:754.2px;width:159px;height:11.6px;background:#282828;border-radius:3.5px;"></div>
<div class="tn" style="left:854px;top:754.7px;line-height:11.6px;">Flat</div>
<svg style="left:1000.5px;top:757.5px;" width="6" height="5" viewBox="0 0 6 5"><path d="M0.8 1 L3 3.4 L5.2 1" stroke="#e0e0e0" stroke-width="1" fill="none"/></svg>
<div style="left:850px;top:772.2px;width:159px;height:11.6px;background:#282828;border-radius:3.5px;"></div>
<div class="tn" style="left:854px;top:772.7px;line-height:11.6px;">Repeat</div>
<svg style="left:1000.5px;top:775.5px;" width="6" height="5" viewBox="0 0 6 5"><path d="M0.8 1 L3 3.4 L5.2 1" stroke="#e0e0e0" stroke-width="1" fill="none"/></svg>
<div style="left:850px;top:791.2px;width:159px;height:11.6px;background:#282828;border-radius:3.5px;"></div>
<div class="tn" style="left:854px;top:791.7px;line-height:11.6px;">Generated</div>
<svg style="left:1000.5px;top:794.5px;" width="6" height="5" viewBox="0 0 6 5"><path d="M0.8 1 L3 3.4 L5.2 1" stroke="#e0e0e0" stroke-width="1" fill="none"/></svg>
<div class="tn" style="left:850px;top:809.5px;line-height:12px;">Color Space</div>
<div style="left:933px;top:809.2px;width:76px;height:11.6px;background:#282828;border-radius:3.5px;"></div>
<div class="tn" style="left:937px;top:809.7px;line-height:11.6px;">sRGB</div>
<svg style="left:1000.5px;top:812.5px;" width="6" height="5" viewBox="0 0 6 5"><path d="M0.8 1 L3 3.4 L5.2 1" stroke="#e0e0e0" stroke-width="1" fill="none"/></svg>
<div class="tn" style="left:850px;top:827.5px;line-height:12px;">Vector</div>
<svg style="left:836.5px;top:829px;" width="8" height="8" viewBox="0 0 8 8"><circle cx="4" cy="4" r="3" fill="#6363c7" stroke="#1c1c1c" stroke-width=".7"/></svg>
<div style="left:1186.4px;top:565px;width:175.5999999999999px;height:420px;background:rgba(62,62,62,.96);border-radius:3px 3px 0 0;box-shadow:0 2px 5px rgba(0,0,0,.55);overflow:hidden;"><div style="left:0;top:0;width:175.5999999999999px;height:14.5px;background:#2f8c53;"></div></div>
<svg style="left:1192.9px;top:570px;" width="6" height="6" viewBox="0 0 6 6"><path d="M0.3 0.6 H5.7 L3 5.6Z" fill="#e0e0e0"/></svg>
<div class="tn" style="left:1201.4px;top:565.0px;line-height:14.5px;">Principled BSDF</div>
<div class="tn" style="right:572px;top:583px;line-height:14px;">BSDF</div>
<div style="left:1193px;top:606.0px;width:160px;height:11.6px;background:#282828;border-radius:3.5px;"></div>
<div class="tn" style="left:1197px;top:606.5px;line-height:11.6px;">GGX</div>
<svg style="left:1344.5px;top:609.3px;" width="6" height="5" viewBox="0 0 6 5"><path d="M0.8 1 L3 3.4 L5.2 1" stroke="#e0e0e0" stroke-width="1" fill="none"/></svg>
<div style="left:1193px;top:624.2px;width:160px;height:11.6px;background:#282828;border-radius:3.5px;"></div>
<div class="tn" style="left:1197px;top:624.7px;line-height:11.6px;">Christensen-Burley</div>
<svg style="left:1344.5px;top:627.5px;" width="6" height="5" viewBox="0 0 6 5"><path d="M0.8 1 L3 3.4 L5.2 1" stroke="#e0e0e0" stroke-width="1" fill="none"/></svg>
<div class="tn" style="left:1194.5px;top:642.7px;line-height:12px;">Base Color</div>
<div style="left:1277px;top:642.2px;width:76px;height:12px;background:#e7000b;border-radius:3.5px;"></div>
<svg style="left:1181.5px;top:644.7px;" width="8" height="8" viewBox="0 0 8 8"><circle cx="4" cy="4" r="3" fill="#c7c729" stroke="#1c1c1c" stroke-width=".7"/></svg>
<div style="left:1193px;top:658.3000000000001px;width:160px;height:11.6px;background:#545454;border-radius:3.5px;overflow:hidden;"></div>
<div class="tn" style="left:1201px;top:658.8000000000001px;line-height:11.6px;">Subsurface</div>
<div class="tn" style="right:574.5px;top:658.3000000000001px;line-height:11.6px;">0.000</div>
<svg style="left:1181.5px;top:660.6px;" width="8" height="8" viewBox="0 0 8 8"><circle cx="4" cy="4" r="3" fill="#a1a1a1" stroke="#1c1c1c" stroke-width=".7"/></svg>
<div style="left:1193px;top:674.2px;width:160px;height:11.6px;background:#282828;border-radius:3.5px;"></div>
<div class="tn" style="left:1197px;top:674.7px;line-height:11.6px;">Subsurface Radius</div>
<svg style="left:1344.5px;top:677.5px;" width="6" height="5" viewBox="0 0 6 5"><path d="M0.8 1 L3 3.4 L5.2 1" stroke="#e0e0e0" stroke-width="1" fill="none"/></svg>
<svg style="left:1181.5px;top:676.5px;" width="8" height="8" viewBox="0 0 8 8"><circle cx="4" cy="4" r="3" fill="#6363c7" stroke="#1c1c1c" stroke-width=".7"/></svg>
<div class="tn" style="left:1194.5px;top:690.4000000000001px;line-height:12px;">Subsurface Color</div>
<div style="left:1277px;top:689.9000000000001px;width:76px;height:12px;background:#e8e8e8;border-radius:3.5px;"></div>
<svg style="left:1181.5px;top:692.4000000000001px;" width="8" height="8" viewBox="0 0 8 8"><circle cx="4" cy="4" r="3" fill="#c7c729" stroke="#1c1c1c" stroke-width=".7"/></svg>
<div style="left:1193px;top:706.0000000000001px;width:160px;height:11.6px;background:#545454;border-radius:3.5px;overflow:hidden;"></div>
<div class="tn" style="left:1201px;top:706.5000000000001px;line-height:11.6px;">Metallic</div>
<div class="tn" style="right:574.5px;top:706.0000000000001px;line-height:11.6px;">0.000</div>
<svg style="left:1181.5px;top:708.3000000000001px;" width="8" height="8" viewBox="0 0 8 8"><circle cx="4" cy="4" r="3" fill="#a1a1a1" stroke="#1c1c1c" stroke-width=".7"/></svg>
<div style="left:1193px;top:721.9000000000001px;width:160px;height:11.6px;background:#545454;border-radius:3.5px;overflow:hidden;"><div style="left:0;top:0;width:79.0px;height:11.6px;background:#5680c2;"></div></div>
<div class="tn" style="left:1201px;top:722.4000000000001px;line-height:11.6px;">Specular</div>
<div class="tn" style="right:574.5px;top:721.9000000000001px;line-height:11.6px;">0.500</div>
<svg style="left:1181.5px;top:724.2px;" width="8" height="8" viewBox="0 0 8 8"><circle cx="4" cy="4" r="3" fill="#a1a1a1" stroke="#1c1c1c" stroke-width=".7"/></svg>
<div style="left:1193px;top:737.8000000000001px;width:160px;height:11.6px;background:#545454;border-radius:3.5px;overflow:hidden;"></div>
<div class="tn" style="left:1201px;top:738.3000000000001px;line-height:11.6px;">Specular Tint</div>
<div class="tn" style="right:574.5px;top:737.8000000000001px;line-height:11.6px;">0.000</div>
<svg style="left:1181.5px;top:740.1px;" width="8" height="8" viewBox="0 0 8 8"><circle cx="4" cy="4" r="3" fill="#a1a1a1" stroke="#1c1c1c" stroke-width=".7"/></svg>
<div style="left:1193px;top:753.7px;width:160px;height:11.6px;background:#545454;border-radius:3.5px;overflow:hidden;"><div style="left:0;top:0;width:79.0px;height:11.6px;background:#5680c2;"></div></div>
<div class="tn" style="left:1201px;top:754.2px;line-height:11.6px;">Roughness</div>
<div class="tn" style="right:574.5px;top:753.7px;line-height:11.6px;">0.500</div>
<svg style="left:1181.5px;top:756.0px;" width="8" height="8" viewBox="0 0 8 8"><circle cx="4" cy="4" r="3" fill="#a1a1a1" stroke="#1c1c1c" stroke-width=".7"/></svg>
<div style="left:1193px;top:769.6000000000001px;width:160px;height:11.6px;background:#545454;border-radius:3.5px;overflow:hidden;"></div>
<div class="tn" style="left:1201px;top:770.1000000000001px;line-height:11.6px;">Anisotropic</div>
<div class="tn" style="right:574.5px;top:769.6000000000001px;line-height:11.6px;">0.000</div>
<svg style="left:1181.5px;top:771.9000000000001px;" width="8" height="8" viewBox="0 0 8 8"><circle cx="4" cy="4" r="3" fill="#a1a1a1" stroke="#1c1c1c" stroke-width=".7"/></svg>
<div style="left:1193px;top:785.5000000000001px;width:160px;height:11.6px;background:#545454;border-radius:3.5px;overflow:hidden;"></div>
<div class="tn" style="left:1201px;top:786.0000000000001px;line-height:11.6px;">Anisotropic Rotation</div>
<div class="tn" style="right:574.5px;top:785.5000000000001px;line-height:11.6px;">0.000</div>
<svg style="left:1181.5px;top:787.8000000000001px;" width="8" height="8" viewBox="0 0 8 8"><circle cx="4" cy="4" r="3" fill="#a1a1a1" stroke="#1c1c1c" stroke-width=".7"/></svg>
<div style="left:1193px;top:801.4000000000001px;width:160px;height:11.6px;background:#545454;border-radius:3.5px;overflow:hidden;"></div>
<div class="tn" style="left:1201px;top:801.9000000000001px;line-height:11.6px;">Sheen</div>
<div class="tn" style="right:574.5px;top:801.4000000000001px;line-height:11.6px;">0.000</div>
<svg style="left:1181.5px;top:803.7px;" width="8" height="8" viewBox="0 0 8 8"><circle cx="4" cy="4" r="3" fill="#a1a1a1" stroke="#1c1c1c" stroke-width=".7"/></svg>
<div style="left:1193px;top:817.3000000000001px;width:160px;height:11.6px;background:#545454;border-radius:3.5px;overflow:hidden;"><div style="left:0;top:0;width:79.0px;height:11.6px;background:#5680c2;"></div></div>
<div class="tn" style="left:1201px;top:817.8000000000001px;line-height:11.6px;">Sheen Tint</div>
<div class="tn" style="right:574.5px;top:817.3000000000001px;line-height:11.6px;">0.500</div>
<svg style="left:1181.5px;top:819.6px;" width="8" height="8" viewBox="0 0 8 8"><circle cx="4" cy="4" r="3" fill="#a1a1a1" stroke="#1c1c1c" stroke-width=".7"/></svg>
<div style="left:1193px;top:833.2px;width:160px;height:11.6px;background:#545454;border-radius:3.5px;overflow:hidden;"></div>
<div class="tn" style="left:1201px;top:833.7px;line-height:11.6px;">Clearcoat</div>
<div class="tn" style="right:574.5px;top:833.2px;line-height:11.6px;">0.000</div>
<svg style="left:1181.5px;top:835.5px;" width="8" height="8" viewBox="0 0 8 8"><circle cx="4" cy="4" r="3" fill="#a1a1a1" stroke="#1c1c1c" stroke-width=".7"/></svg>
<div style="left:1193px;top:849.1000000000001px;width:160px;height:11.6px;background:#545454;border-radius:3.5px;overflow:hidden;"><div style="left:0;top:0;width:3.2px;height:11.6px;background:#5680c2;"></div></div>
<div class="tn" style="left:1201px;top:849.6000000000001px;line-height:11.6px;">Clearcoat Roughness</div>
<div class="tn" style="right:574.5px;top:849.1000000000001px;line-height:11.6px;">0.030</div>
<svg style="left:1181.5px;top:851.4000000000001px;" width="8" height="8" viewBox="0 0 8 8"><circle cx="4" cy="4" r="3" fill="#a1a1a1" stroke="#1c1c1c" stroke-width=".7"/></svg>
<div style="left:1193px;top:865.0000000000001px;width:160px;height:11.6px;background:#545454;border-radius:3.5px;overflow:hidden;"></div>
<div class="tn" style="left:1201px;top:865.5000000000001px;line-height:11.6px;">IOR</div>
<div class="tn" style="right:574.5px;top:865.0000000000001px;line-height:11.6px;">1.450</div>
<svg style="left:1181.5px;top:867.3000000000001px;" width="8" height="8" viewBox="0 0 8 8"><circle cx="4" cy="4" r="3" fill="#a1a1a1" stroke="#1c1c1c" stroke-width=".7"/></svg>
<div style="left:1193px;top:880.9000000000001px;width:160px;height:11.6px;background:#545454;border-radius:3.5px;overflow:hidden;"></div>
<div class="tn" style="left:1201px;top:881.4000000000001px;line-height:11.6px;">Transmission</div>
<div class="tn" style="right:574.5px;top:880.9000000000001px;line-height:11.6px;">0.000</div>
<svg style="left:1181.5px;top:883.2px;" width="8" height="8" viewBox="0 0 8 8"><circle cx="4" cy="4" r="3" fill="#a1a1a1" stroke="#1c1c1c" stroke-width=".7"/></svg>
<div style="left:1193px;top:896.8000000000001px;width:160px;height:11.6px;background:#545454;border-radius:3.5px;overflow:hidden;"></div>
<div class="tn" style="left:1201px;top:897.3000000000001px;line-height:11.6px;">Transmission Roughness</div>
<div class="tn" style="right:574.5px;top:896.8000000000001px;line-height:11.6px;">0.000</div>
<svg style="left:1181.5px;top:899.1px;" width="8" height="8" viewBox="0 0 8 8"><circle cx="4" cy="4" r="3" fill="#a1a1a1" stroke="#1c1c1c" stroke-width=".7"/></svg>
<div class="tn" style="left:1194.5px;top:913.0px;line-height:12px;">Emission</div>
<div style="left:1277px;top:912.5px;width:76px;height:12px;background:#000000;border-radius:3.5px;"></div>
<svg style="left:1181.5px;top:915.0px;" width="8" height="8" viewBox="0 0 8 8"><circle cx="4" cy="4" r="3" fill="#c7c729" stroke="#1c1c1c" stroke-width=".7"/></svg>
<div style="left:1193px;top:928.6000000000001px;width:160px;height:11.6px;background:#545454;border-radius:3.5px;overflow:hidden;"></div>
<div class="tn" style="left:1201px;top:929.1000000000001px;line-height:11.6px;">Emission Strength</div>
<div class="tn" style="right:574.5px;top:928.6000000000001px;line-height:11.6px;">1.000</div>
<svg style="left:1181.5px;top:930.9000000000001px;" width="8" height="8" viewBox="0 0 8 8"><circle cx="4" cy="4" r="3" fill="#a1a1a1" stroke="#1c1c1c" stroke-width=".7"/></svg>
<div style="left:1193px;top:944.5000000000001px;width:160px;height:11.6px;background:#545454;border-radius:3.5px;overflow:hidden;"><div style="left:0;top:0;width:160.0px;height:11.6px;background:#5680c2;"></div></div>
<div class="tn" style="left:1201px;top:945.0000000000001px;line-height:11.6px;">Alpha</div>
<div class="tn" style="right:574.5px;top:944.5000000000001px;line-height:11.6px;">1.000</div>
<svg style="left:1181.5px;top:946.8000000000001px;" width="8" height="8" viewBox="0 0 8 8"><circle cx="4" cy="4" r="3" fill="#a1a1a1" stroke="#1c1c1c" stroke-width=".7"/></svg>
<div class="tn" style="left:1194.5px;top:960.7px;line-height:12px;">Normal</div>
<svg style="left:1181.5px;top:962.7px;" width="8" height="8" viewBox="0 0 8 8"><circle cx="4" cy="4" r="3" fill="#6363c7" stroke="#1c1c1c" stroke-width=".7"/></svg>
<div class="tn" style="left:1194.5px;top:976.6000000000001px;line-height:12px;">Clearcoat Normal</div>
<svg style="left:1181.5px;top:978.6000000000001px;" width="8" height="8" viewBox="0 0 8 8"><circle cx="4" cy="4" r="3" fill="#6363c7" stroke="#1c1c1c" stroke-width=".7"/></svg>
<svg style="left:1362px;top:585px;" width="40" height="30" viewBox="0 0 40 30"><path d="M0 5.5 C16 5.5 19 23.5 37 23.5" stroke="#1a1a1a" stroke-width="4" fill="none"/><path d="M0 5.5 C16 5.5 19 23.5 37 23.5" stroke="#8e8e8e" stroke-width="2.4" fill="none"/></svg>
<svg style="left:1358px;top:586.5px;" width="8" height="8" viewBox="0 0 8 8"><circle cx="4" cy="4" r="3" fill="#63c763" stroke="#1c1c1c" stroke-width=".7"/></svg>
<div style="left:1399px;top:565px;width:103px;height:85.70000000000005px;background:rgba(62,62,62,.96);border-radius:3px;box-shadow:0 2px 5px rgba(0,0,0,.55);overflow:hidden;"><div style="left:0;top:0;width:103px;height:14.5px;background:#8c2f3a;"></div></div>
<svg style="left:1405.5px;top:570px;" width="6" height="6" viewBox="0 0 6 6"><path d="M0.3 0.6 H5.7 L3 5.6Z" fill="#e0e0e0"/></svg>
<div class="tn" style="left:1415.5px;top:565.0px;line-height:14.5px;">Material Output</div>
<div style="left:1407px;top:584.2px;width:87px;height:12.6px;background:#282828;border-radius:3.5px;"></div>
<div class="tn" style="left:1411px;top:584.7px;line-height:12.6px;">All</div>
<svg style="left:1485.5px;top:588.0px;" width="6" height="5" viewBox="0 0 6 5"><path d="M0.8 1 L3 3.4 L5.2 1" stroke="#e0e0e0" stroke-width="1" fill="none"/></svg>
<div class="tn" style="left:1408px;top:602.4px;line-height:12px;">Surface</div>
<svg style="left:1395px;top:604.4px;" width="8" height="8" viewBox="0 0 8 8"><circle cx="4" cy="4" r="3" fill="#63c763" stroke="#1c1c1c" stroke-width=".7"/></svg>
<div class="tn" style="left:1408px;top:618.3px;line-height:12px;">Volume</div>
<svg style="left:1395px;top:620.3px;" width="8" height="8" viewBox="0 0 8 8"><circle cx="4" cy="4" r="3" fill="#63c763" stroke="#1c1c1c" stroke-width=".7"/></svg>
<div class="tn" style="left:1408px;top:634.2px;line-height:12px;">Displacement</div>
<svg style="left:1395px;top:636.2px;" width="8" height="8" viewBox="0 0 8 8"><circle cx="4" cy="4" r="3" fill="#6363c7" stroke="#1c1c1c" stroke-width=".7"/></svg>
<div style="left:650px;top:979px;width:935px;height:1px;background:#1d1d1d;"></div>
<!-- s_status.py -->
<div style="left:0px;top:979px;width:1919px;height:25.5px;background:#2f2f2f;"></div>
<svg style="left:11.00px;top:982.50px;" width="19" height="19" viewBox="0 0 16 16"><rect x="4" y="1.4" width="8.4" height="13.2" rx="3.4" fill="none" stroke="#d8d8d8" stroke-width="1.1"/><path d="M4 7.4 V4.8 A3.4 3.4 0 0 1 7.4 1.4 H8.2 V7.4Z" fill="#d8d8d8"/></svg>
<svg style="left:323.50px;top:982.50px;" width="19" height="19" viewBox="0 0 16 16"><rect x="3.8" y="1.4" width="8.4" height="13.2" rx="3.4" fill="none" stroke="#d8d8d8" stroke-width="1.1"/><rect x="6.8" y="3.4" width="2.4" height="5" rx="1.2" fill="#d8d8d8"/></svg>
<svg style="left:635.00px;top:982.50px;" width="19" height="19" viewBox="0 0 16 16"><rect x="3.6" y="1.4" width="8.4" height="13.2" rx="3.4" fill="none" stroke="#d8d8d8" stroke-width="1.1"/><path d="M12 7.4 V4.8 A3.4 3.4 0 0 0 8.6 1.4 H7.8 V7.4Z" fill="#d8d8d8"/></svg>
<div class="t" style="left:664px;top:980.5px;line-height:24px;color:#b8b8b8;">Context Menu</div>
<div class="t" style="left:1859px;top:980.5px;line-height:24px;color:#b0b0b0;">2.91.2</div>
<div style="left:0px;top:1004.5px;width:1919px;height:8px;background:#ead9d9;"></div>
<div style="left:61px;top:1004.5px;width:429px;height:8px;background:#ffffff;"></div>
<div style="left:925px;top:1004.5px;width:62px;height:8px;background:#f7eeee;"></div>
</div></div>
</body></html>
